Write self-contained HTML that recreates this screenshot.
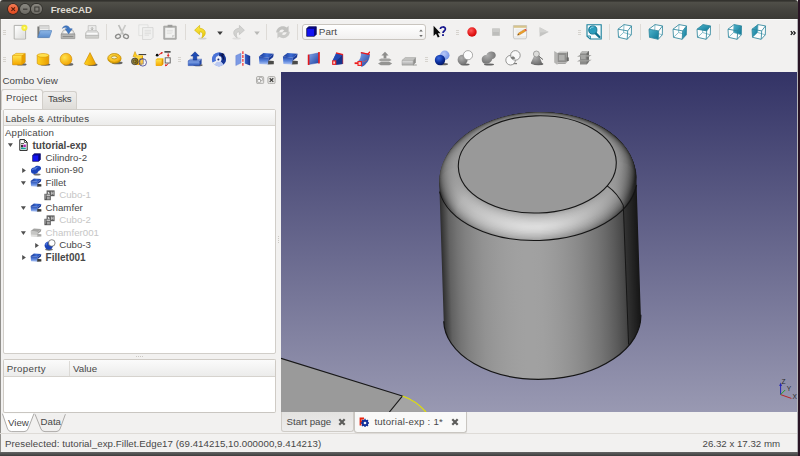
<!DOCTYPE html>
<html>
<head>
<meta charset="utf-8">
<title>FreeCAD</title>
<style>
*{box-sizing:border-box;margin:0;padding:0}
html,body{width:800px;height:456px;overflow:hidden;background:#2a1424;font-family:"Liberation Sans",sans-serif;font-size:9.7px;color:#474747}
.abs{position:absolute}
#win{position:absolute;left:0;top:0;width:798px;height:452.3px;background:#f2f1f0;overflow:hidden}
#title{position:absolute;left:0;top:0;width:798px;height:18.6px;background:linear-gradient(#33322e 0,#33322e 1.2px,#504f49 2px,#45443f 50%,#3b3a36 100%);border-radius:3px 3px 0 0}
#title .t{position:absolute;left:50.7px;top:4.4px;font-weight:bold;font-size:9.8px;color:#dfdbd2;letter-spacing:-0.1px}
.wb{position:absolute;top:3.9px;width:10.4px;height:10.4px;border-radius:50%}
.t10{font-size:9.7px;white-space:nowrap;position:absolute;line-height:12px}
#view3d{position:absolute;left:281px;top:72px;width:516px;height:340px;background:linear-gradient(#333366 0,#9999b2 100%);overflow:hidden}
.tree{position:absolute;left:2.6px;top:108.6px;width:273.6px;height:245.8px;background:#fff;border:1.3px solid #d1cec9;border-radius:2px}
.hdr{position:absolute;left:0;top:0;right:0;height:16px;background:linear-gradient(#fbfbfb,#ececeb);border-bottom:1px solid #d6d3ce}
.row{position:absolute;white-space:nowrap;font-size:9.7px;line-height:12px;height:12px}
.dis{color:#c6c6c6}
.b{font-weight:bold}
</style>
</head>
<body>
<div id="win">
  <div id="title">
    <div class="wb" style="left:7.7px;background:linear-gradient(#f47a52,#e0481e);box-shadow:0 0 0 0.8px #3a2018"></div>
    <div class="wb" style="left:19.7px;background:linear-gradient(#8a8881,#6b6963);box-shadow:0 0 0 0.9px #33322e"></div>
    <div class="wb" style="left:31.4px;background:linear-gradient(#8a8881,#6b6963);box-shadow:0 0 0 0.9px #33322e"></div>
    <svg class="abs" style="left:7.7px;top:3.9px" width="40" height="11" viewBox="0 0 40 11"><path d="M3.4,3.3 L7,6.9 M7,3.3 L3.4,6.9" stroke="#5a1c0b" stroke-width="1.1"/><path d="M15,5.2 H19.4" stroke="#3a3935" stroke-width="1.2"/><rect x="26.8" y="3" width="4.2" height="4.2" fill="#7f7d77" stroke="#3a3935" stroke-width="1"/></svg>
    <div class="t">FreeCAD</div>
  </div>
  <div class="abs" style="left:0;top:18.6px;width:1px;height:434px;background:#918f8b"></div>

  <div class="abs" style="left:1px;top:18.6px;width:796px;height:1px;background:#fafaf9"></div>
  <!-- TOOLBARS -->
  <svg width="0" height="0" style="position:absolute"><defs><linearGradient id="gy" x1="0" y1="0" x2="0" y2="1"><stop offset="0" stop-color="#ffe14a"/><stop offset="1" stop-color="#f5a800"/></linearGradient><linearGradient id="gy2" x1="0" y1="0" x2="1" y2="0"><stop offset="0" stop-color="#ffd21e"/><stop offset="1" stop-color="#e89c00"/></linearGradient><radialGradient id="gys" cx="0.38" cy="0.35" r="0.7"><stop offset="0" stop-color="#ffe24e"/><stop offset="1" stop-color="#f2a200"/></radialGradient><linearGradient id="gbl" x1="0" y1="0" x2="0" y2="1"><stop offset="0" stop-color="#8fb0ee"/><stop offset="1" stop-color="#2a55b8"/></linearGradient><linearGradient id="gbl2" x1="0" y1="0" x2="1" y2="1"><stop offset="0" stop-color="#86a8ec"/><stop offset="1" stop-color="#1d3f9e"/></linearGradient><radialGradient id="gbs" cx="0.38" cy="0.32" r="0.7"><stop offset="0" stop-color="#3b6be0"/><stop offset="0.6" stop-color="#0c2f9c"/><stop offset="1" stop-color="#061a66"/></radialGradient><radialGradient id="gls" cx="0.4" cy="0.35" r="0.7"><stop offset="0" stop-color="#b8c8f8"/><stop offset="1" stop-color="#6f8fe4"/></radialGradient><radialGradient id="ggs" cx="0.38" cy="0.32" r="0.75"><stop offset="0" stop-color="#b0b0b0"/><stop offset="1" stop-color="#6c6c6c"/></radialGradient><radialGradient id="grd" cx="0.4" cy="0.35" r="0.7"><stop offset="0" stop-color="#ff5a5a"/><stop offset="0.7" stop-color="#e01414"/><stop offset="1" stop-color="#c80c0c"/></radialGradient><linearGradient id="ggr" x1="0" y1="0" x2="0" y2="1"><stop offset="0" stop-color="#e2e2e2"/><stop offset="1" stop-color="#a4a4a4"/></linearGradient><linearGradient id="gtl" x1="0" y1="0" x2="1" y2="1"><stop offset="0" stop-color="#4fb4cc"/><stop offset="1" stop-color="#0e7796"/></linearGradient></defs></svg>
<div class="abs" style="left:3.0px;top:29.7px;width:3px;height:5px;background:repeating-linear-gradient(#d6d3ce 0,#d6d3ce 1px,transparent 1px,transparent 2px)"></div>
<svg class="abs" style="left:11.80px;top:24.20px" width="16" height="16" viewBox="0 0 16 16"><path d="M2.2,1.4 H13.6 V15 H2.2 Z" fill="#f4f4f3" stroke="#a9a9a6" stroke-width="0.9"/><path d="M3,2.2 H12.8 V14.2 H3 Z" fill="url(#pg)"/><defs><linearGradient id="pg" x1="0" y1="0" x2="1" y2="1"><stop offset="0" stop-color="#ffffff"/><stop offset="1" stop-color="#dcdcda"/></linearGradient><radialGradient id="st"><stop offset="0" stop-color="#ffffd0"/><stop offset="0.45" stop-color="#f6ee3a"/><stop offset="1" stop-color="#f2e62a" stop-opacity="0.85"/></radialGradient></defs><circle cx="12.4" cy="3.8" r="3.1" fill="url(#st)"/></svg>
<svg class="abs" style="left:36.00px;top:24.20px" width="16" height="16" viewBox="0 0 16 16"><path d="M1.4,2.6 H5 L6,3.6 H12.6 V13.4 H1.4 Z" fill="#787876"/><path d="M3.4,1.6 H13 V9 H3.4 Z" fill="#f0f0ef" stroke="#a8a8a6" stroke-width="0.6"/><path d="M4,2.8 H12.6 M4,4.2 H12.6" stroke="#c4c4c2" stroke-width="0.8"/><path d="M4.2,6.6 H15.8 L13.4,13.6 H1.8 Z" fill="url(#fo)" stroke="#4a7ab8" stroke-width="0.6"/><defs><linearGradient id="fo" x1="0" y1="0" x2="0" y2="1"><stop offset="0" stop-color="#8db6e6"/><stop offset="1" stop-color="#5a8ccc"/></linearGradient></defs></svg>
<svg class="abs" style="left:59.60px;top:24.20px" width="16" height="16" viewBox="0 0 16 16"><path d="M1.2,10 L3.6,6 H12.6 L14.8,10 Z" fill="#e4e4e3" stroke="#a2a2a0" stroke-width="0.7"/><path d="M3.4,9.4 L4.8,7 H11.2 L12.6,9.4 Z" fill="#f6f6f5"/><path d="M1.2,10 H14.8 V14.6 H1.2 Z" fill="#b6b6b4" stroke="#8e8e8c" stroke-width="0.7"/><path d="M2.6,12.6 H13.4" stroke="#8a8a88" stroke-width="1.1"/><path d="M2.4,4.4 C3.4,1.2 8.6,0.6 10,4.8 L12.2,4.8 L8.6,9.8 L5.2,4.8 L7.2,4.8 C6.6,3 4.2,2.6 2.4,4.4 Z" fill="#3f78c4" stroke="#2a5ca4" stroke-width="0.5" stroke-linejoin="round"/></svg>
<svg class="abs" style="left:83.60px;top:24.20px" width="16" height="16" viewBox="0 0 16 16"><path d="M4.2,1.6 H12 V7.4 H4.2 Z" fill="#ececeb" stroke="#bcbcba" stroke-width="0.7"/><path d="M8.1,3 V5.4 M7,4.6 L8.1,5.8 L9.2,4.6" stroke="#a6a6a4" stroke-width="0.9" fill="none"/><path d="M1.6,9 L3.4,6.8 H12.8 L14.6,9 V12 H1.6 Z" fill="#e0e0df" stroke="#b4b4b2" stroke-width="0.7"/><path d="M1.6,11.4 H14.6 V14.2 H1.6 Z" fill="#d0d0ce" stroke="#b4b4b2" stroke-width="0.7"/><path d="M2.8,9.8 H13.4" stroke="#fafafa" stroke-width="1.5"/></svg>
<div class="abs" style="left:106.2px;top:24.2px;width:1px;height:16px;background:#dedbd7"></div>
<svg class="abs" style="left:114.00px;top:24.20px" width="16" height="16" viewBox="0 0 16 16"><path d="M4.6,1 L9.2,10.4" stroke="#bcbcba" stroke-width="1.7" fill="none"/><path d="M11.4,1 L6.8,10.4" stroke="#cacac8" stroke-width="1.7" fill="none"/><ellipse cx="4" cy="12.4" rx="2.5" ry="2" fill="none" stroke="#8e8e8c" stroke-width="1.4" transform="rotate(-25 4 12.4)"/><ellipse cx="12" cy="12.4" rx="2.5" ry="2" fill="none" stroke="#8e8e8c" stroke-width="1.4" transform="rotate(25 12 12.4)"/></svg>
<svg class="abs" style="left:138.00px;top:24.20px" width="16" height="16" viewBox="0 0 16 16"><path d="M0.8,0.8 H10 V11.6 H0.8 Z" fill="#f3f3f2" stroke="#dcdcda" stroke-width="0.8"/><path d="M4.6,3.6 H15 V13.4 L12.8,15.6 H4.6 Z" fill="#f0f0ef" stroke="#d2d2d0" stroke-width="0.8"/><path d="M6.6,6.4 H13 M6.6,8 H13 M6.6,9.6 H13 M6.6,11.2 H11" stroke="#dededc" stroke-width="0.9"/></svg>
<svg class="abs" style="left:161.80px;top:24.20px" width="16" height="16" viewBox="0 0 16 16"><path d="M1.8,2.2 H14.2 V15.2 H1.8 Z" fill="#b4b4b2" stroke="#9a9a98" stroke-width="0.8"/><path d="M3.2,3.8 H12.8 V13.8 H3.2 Z" fill="#f2f2f1"/><path d="M5.6,0.8 H10.4 V3.2 H5.6 Z" fill="#9c9c9a"/><path d="M4.8,6.4 H10.8 M4.8,8 H10.8 M4.8,9.6 H9.6" stroke="#dcdcda" stroke-width="0.8"/><path d="M10.2,13.8 V11.2 H12.8 Z" fill="#c8c8c6"/></svg>
<div class="abs" style="left:185.1px;top:24.2px;width:1px;height:16px;background:#dedbd7"></div>
<svg class="abs" style="left:193.00px;top:24.20px" width="16" height="16" viewBox="0 0 16 16"><defs><linearGradient id="un" x1="0" y1="0" x2="0" y2="1"><stop offset="0" stop-color="#fbe94a"/><stop offset="1" stop-color="#e8c60a"/></linearGradient></defs><ellipse cx="9.4" cy="14.4" rx="4.2" ry="1" fill="#c8c8c6" opacity="0.8"/><path d="M6.6,1.4 L1.6,6.2 L6.6,10.6 V8 C9.2,7.6 10.8,9.4 8.8,13.8 C13,11.8 14.6,5.2 6.6,4.2 Z" fill="url(#un)" stroke="#d6b806" stroke-width="0.7" stroke-linejoin="round"/></svg>
<svg class="abs" style="left:211.60px;top:24.50px" width="16" height="16" viewBox="0 0 16 16"><path d="M5.2,6.6 H10.8 L8,10 Z" fill="#3c3c3c"/></svg>
<svg class="abs" style="left:230.30px;top:24.20px" width="16" height="16" viewBox="0 0 16 16"><ellipse cx="6.6" cy="14.4" rx="4.2" ry="1" fill="#dadad8" opacity="0.8"/><path d="M9.4,1.4 L14.4,6.2 L9.4,10.6 V8 C6.8,7.6 5.2,9.4 7.2,13.8 C3,11.8 1.4,5.2 9.4,4.2 Z" fill="#d2d2d0" stroke="#c0c0be" stroke-width="0.7" stroke-linejoin="round"/></svg>
<svg class="abs" style="left:248.70px;top:24.50px" width="16" height="16" viewBox="0 0 16 16"><path d="M5.2,6.6 H10.8 L8,10 Z" fill="#b8b8b6"/></svg>
<div class="abs" style="left:266.0px;top:24.2px;width:1px;height:16px;background:#dedbd7"></div>
<svg class="abs" style="left:274.60px;top:23.80px" width="16" height="16" viewBox="0 0 16 16"><path d="M1.2,8.6 C1.2,3.2 7.6,0.4 11.8,3.6 L13.6,1.8 V8.2 H7.2 L9.2,6.2 C7,4.6 4.4,5.8 4.2,8.6 Z" fill="#c2c2c0"/><path d="M14.8,7.8 C14.8,13.2 8.4,16 4.2,12.8 L2.4,14.6 V8.2 H8.8 L6.8,10.2 C9,11.8 11.6,10.6 11.8,7.8 Z" fill="#cacac8"/></svg>
<div class="abs" style="left:297.1px;top:24.2px;width:1px;height:16px;background:#dedbd7"></div>
<div class="abs" style="left:302.4px;top:24.2px;width:124px;height:15.6px;border:1px solid #c9c5bf;border-radius:3px;background:linear-gradient(#ffffff,#f1f0ef)"></div>
<svg class="abs" style="left:305.50px;top:26.10px" width="11" height="11" viewBox="0 0 11 11"><path d="M0.7,2.6 L2.6,0.7 H10.3 V8.2 L8.4,10.3 H0.7 Z" fill="#0a0a8c" stroke="#04044a" stroke-width="0.7"/><rect x="1.2" y="3" width="6.9" height="6.9" fill="#1212f2"/><path d="M8.4,2.9 L10,1.3 V8 L8.4,9.8 Z" fill="#060674"/></svg>
<div class="t10" style="left:318.8px;top:26.2px;font-size:9.9px">Part</div>
<svg class="abs" style="left:417.5px;top:28px" width="6" height="10" viewBox="0 0 6 10"><path d="M1.2,3.4 L3,1.4 L4.8,3.4 Z M1.2,7 L3,9 L4.8,7 Z" fill="#6c6c6a"/></svg>
<svg class="abs" style="left:431.60px;top:24.20px" width="16" height="16" viewBox="0 0 16 16"><path d="M1.6,1.8 V12 L4,9.8 L5.8,13.6 L7.6,12.8 L5.8,9.2 H8.6 Z" fill="#0a0a0a"/><path d="M8.4,5 C8.4,2.4 13.4,2.2 13.4,5 C13.4,7 11,7 11,9" fill="none" stroke="#14148c" stroke-width="1.7"/><rect x="10.1" y="10.2" width="1.8" height="1.8" fill="#14148c"/></svg>
<div class="abs" style="left:455.5px;top:29.7px;width:3px;height:5px;background:repeating-linear-gradient(#d6d3ce 0,#d6d3ce 1px,transparent 1px,transparent 2px)"></div>
<svg class="abs" style="left:464.20px;top:24.20px" width="16" height="16" viewBox="0 0 16 16"><circle cx="8" cy="8" r="4.7" fill="url(#grd)"/></svg>
<svg class="abs" style="left:488.00px;top:24.20px" width="16" height="16" viewBox="0 0 16 16"><rect x="4.2" y="4.4" width="7.6" height="7.4" fill="#bdbdbb"/><rect x="4.8" y="5" width="6.4" height="3" fill="#cacac8"/></svg>
<svg class="abs" style="left:511.60px;top:23.90px" width="16" height="16" viewBox="0 0 16 16"><path d="M1.4,1.6 H14.6 V13 L13.8,14.8 H2.2 L1.4,13 Z" fill="#f6f6f5" stroke="#bcbcba" stroke-width="0.8"/><path d="M1.6,1.6 H14.4 V3.8 H1.6 Z" fill="#d8c48a"/><path d="M2,13 H14" stroke="#dcdcda" stroke-width="0.8"/><path d="M3.4,6 H12 M3.4,8 H9 M3.4,10 H7" stroke="#e0e0de" stroke-width="0.7"/><path d="M5.6,11.2 L6.4,9.2 L12.6,5.4 L13.8,7 L7.6,10.8 Z" fill="#f0a028" stroke="#b8741a" stroke-width="0.5"/><path d="M12.6,5.4 L13.6,4.8 L14.8,6.4 L13.8,7 Z" fill="#e23c3c"/><path d="M5.6,11.2 L6.2,9.8 L7,10.8 Z" fill="#4a3a2a"/></svg>
<svg class="abs" style="left:535.60px;top:24.20px" width="16" height="16" viewBox="0 0 16 16"><path d="M3.6,3.2 L12.6,8 L3.6,12.8 Z" fill="#c4c4c2"/><path d="M3.6,3.2 L12.6,8 L3.6,8.6 Z" fill="#d2d2d0"/></svg>
<div class="abs" style="left:577.7px;top:29.7px;width:3px;height:5px;background:repeating-linear-gradient(#d6d3ce 0,#d6d3ce 1px,transparent 1px,transparent 2px)"></div>
<svg class="abs" style="left:586.40px;top:24.00px" width="16" height="16" viewBox="0 0 16 16"><path d="M1,0.8 H15.2 V15 H4.2 L1,12.2 Z" fill="#f7fbfc" stroke="#18809c" stroke-width="1.1"/><path d="M1.2,12 H4.4 V15" fill="none" stroke="#18809c" stroke-width="0.9"/><path d="M9,8.6 L13.4,13" stroke="#0f6f8c" stroke-width="2.4" stroke-linecap="round"/><circle cx="6.8" cy="6" r="4.1" fill="#2a9cbc" stroke="#0f6f8c" stroke-width="0.9"/><path d="M4.2,5 A3,3 0 0 1 7.6,3" stroke="#8fd4e6" stroke-width="1" fill="none"/></svg>
<div class="abs" style="left:608.9px;top:24.2px;width:1px;height:16px;background:#dedbd7"></div>
<svg class="abs" style="left:617.40px;top:24.00px" width="16" height="16" viewBox="0 0 16 16"><path d="M1.0,5.2 L7.0,0.6 L14.5,1.9 L14.3,10.8 L10.2,15.3 L1.5,13.3 Z" fill="#ffffff" fill-opacity="0.85"/><path d="M6.6,8.5 L7.0,0.6 M6.6,8.5 L1.5,13.3 M6.6,8.5 L14.3,10.8" stroke="#5aa6b8" stroke-width="0.7" fill="none"/><path d="M1.0,5.2 L7.0,0.6 L14.5,1.9 L14.3,10.8 L10.2,15.3 L1.5,13.3 Z M10.7,6.9 L1.0,5.2 M10.7,6.9 L14.5,1.9 M10.7,6.9 L10.2,15.3" stroke="#2f879d" stroke-width="0.85" fill="none" stroke-linejoin="round"/></svg>
<div class="abs" style="left:640.1px;top:24.2px;width:1px;height:16px;background:#dedbd7"></div>
<svg class="abs" style="left:648.30px;top:24.00px" width="16" height="16" viewBox="0 0 16 16"><path d="M1.0,5.2 L7.0,0.6 L14.5,1.9 L14.3,10.8 L10.2,15.3 L1.5,13.3 Z" fill="#ffffff" fill-opacity="0.85"/><path d="M6.6,8.5 L7.0,0.6 M6.6,8.5 L1.5,13.3 M6.6,8.5 L14.3,10.8" stroke="#5aa6b8" stroke-width="0.7" fill="none"/><path d="M1.0,5.2 L10.7,6.9 L10.2,15.3 L1.5,13.3 Z" fill="url(#gtl)"/><path d="M1.0,5.2 L7.0,0.6 L14.5,1.9 L14.3,10.8 L10.2,15.3 L1.5,13.3 Z M10.7,6.9 L1.0,5.2 M10.7,6.9 L14.5,1.9 M10.7,6.9 L10.2,15.3" stroke="#2f879d" stroke-width="0.85" fill="none" stroke-linejoin="round"/></svg>
<svg class="abs" style="left:672.10px;top:24.00px" width="16" height="16" viewBox="0 0 16 16"><path d="M1.0,5.2 L7.0,0.6 L14.5,1.9 L14.3,10.8 L10.2,15.3 L1.5,13.3 Z" fill="#ffffff" fill-opacity="0.85"/><path d="M6.6,8.5 L7.0,0.6 M6.6,8.5 L1.5,13.3 M6.6,8.5 L14.3,10.8" stroke="#5aa6b8" stroke-width="0.7" fill="none"/><path d="M10.7,6.9 L14.5,1.9 L14.3,10.8 L10.2,15.3 Z" fill="url(#gtl)"/><path d="M1.0,5.2 L7.0,0.6 L14.5,1.9 L14.3,10.8 L10.2,15.3 L1.5,13.3 Z M10.7,6.9 L1.0,5.2 M10.7,6.9 L14.5,1.9 M10.7,6.9 L10.2,15.3" stroke="#2f879d" stroke-width="0.85" fill="none" stroke-linejoin="round"/></svg>
<svg class="abs" style="left:696.10px;top:24.00px" width="16" height="16" viewBox="0 0 16 16"><path d="M1.0,5.2 L7.0,0.6 L14.5,1.9 L14.3,10.8 L10.2,15.3 L1.5,13.3 Z" fill="#ffffff" fill-opacity="0.85"/><path d="M6.6,8.5 L7.0,0.6 M6.6,8.5 L1.5,13.3 M6.6,8.5 L14.3,10.8" stroke="#5aa6b8" stroke-width="0.7" fill="none"/><path d="M1.0,5.2 L7.0,0.6 L14.5,1.9 L10.7,6.9 Z" fill="url(#gtl)"/><path d="M1.0,5.2 L7.0,0.6 L14.5,1.9 L14.3,10.8 L10.2,15.3 L1.5,13.3 Z M10.7,6.9 L1.0,5.2 M10.7,6.9 L14.5,1.9 M10.7,6.9 L10.2,15.3" stroke="#2f879d" stroke-width="0.85" fill="none" stroke-linejoin="round"/></svg>
<div class="abs" style="left:719.1px;top:24.2px;width:1px;height:16px;background:#dedbd7"></div>
<svg class="abs" style="left:727.00px;top:24.00px" width="16" height="16" viewBox="0 0 16 16"><path d="M1.0,5.2 L7.0,0.6 L14.5,1.9 L14.3,10.8 L10.2,15.3 L1.5,13.3 Z" fill="#ffffff" fill-opacity="0.85"/><path d="M7.0,0.6 L14.5,1.9 L14.3,10.8 L6.6,8.5 Z" fill="url(#gtl)"/><path d="M6.6,8.5 L7.0,0.6 M6.6,8.5 L1.5,13.3 M6.6,8.5 L14.3,10.8" stroke="#5aa6b8" stroke-width="0.7" fill="none"/><path d="M1.0,5.2 L7.0,0.6 L14.5,1.9 L14.3,10.8 L10.2,15.3 L1.5,13.3 Z M10.7,6.9 L1.0,5.2 M10.7,6.9 L14.5,1.9 M10.7,6.9 L10.2,15.3" stroke="#2f879d" stroke-width="0.85" fill="none" stroke-linejoin="round"/></svg>
<svg class="abs" style="left:750.80px;top:24.00px" width="16" height="16" viewBox="0 0 16 16"><path d="M1.0,5.2 L7.0,0.6 L14.5,1.9 L14.3,10.8 L10.2,15.3 L1.5,13.3 Z" fill="#ffffff" fill-opacity="0.85"/><path d="M1.0,5.2 L7.0,0.6 L6.6,8.5 L1.5,13.3 Z" fill="url(#gtl)"/><path d="M6.6,8.5 L7.0,0.6 M6.6,8.5 L1.5,13.3 M6.6,8.5 L14.3,10.8" stroke="#5aa6b8" stroke-width="0.7" fill="none"/><path d="M1.0,5.2 L7.0,0.6 L14.5,1.9 L14.3,10.8 L10.2,15.3 L1.5,13.3 Z M10.7,6.9 L1.0,5.2 M10.7,6.9 L14.5,1.9 M10.7,6.9 L10.2,15.3" stroke="#2f879d" stroke-width="0.85" fill="none" stroke-linejoin="round"/></svg>
<svg class="abs" style="left:784.60px;top:24.80px" width="16" height="16" viewBox="0 0 16 16"><path d="M5.8,6.1 L7.5,8 L5.8,9.9 M8.5,6.1 L10.2,8 L8.5,9.9" stroke="#161616" stroke-width="1.25" fill="none"/></svg>
  <div class="abs" style="left:3.0px;top:56.6px;width:3px;height:5px;background:repeating-linear-gradient(#d6d3ce 0,#d6d3ce 1px,transparent 1px,transparent 2px)"></div>
<svg class="abs" style="left:11.00px;top:50.60px" width="16" height="16" viewBox="0 0 16 16"><ellipse cx="10.6" cy="13.4" rx="5" ry="1.2" fill="#2a2a2a" opacity="0.7"/><path d="M1.6,4.6 L5.2,2.4 H14.2 V11.2 L10.8,13.8 H1.6 Z" fill="#e09600" stroke="#c88600" stroke-width="0.6"/><path d="M1.6,4.6 L5.2,2.4 H14.2 L10.8,4.6 Z" fill="#ffdc4a"/><path d="M1.9,4.9 H10.6 V13.5 H1.9 Z" fill="url(#gy)"/><path d="M10.9,4.8 L14,2.8 V11 L10.9,13.4 Z" fill="#e8a000"/></svg>
<svg class="abs" style="left:34.60px;top:50.60px" width="16" height="16" viewBox="0 0 16 16"><ellipse cx="10.4" cy="13.6" rx="5" ry="1.2" fill="#2a2a2a" opacity="0.7"/><path d="M2.2,4.4 V12.2 A5.8,1.9 0 0 0 13.8,12.2 V4.4 Z" fill="url(#gy2)" stroke="#c88600" stroke-width="0.6"/><ellipse cx="8" cy="4.4" rx="5.8" ry="1.9" fill="#ffe04e" stroke="#d89600" stroke-width="0.6"/></svg>
<svg class="abs" style="left:58.20px;top:50.60px" width="16" height="16" viewBox="0 0 16 16"><ellipse cx="10.4" cy="13.4" rx="5" ry="1.3" fill="#2a2a2a" opacity="0.7"/><circle cx="8" cy="8.2" r="5.9" fill="url(#gys)" stroke="#d08c00" stroke-width="0.6"/></svg>
<svg class="abs" style="left:81.90px;top:50.60px" width="16" height="16" viewBox="0 0 16 16"><ellipse cx="10.6" cy="13.8" rx="5" ry="1.2" fill="#2a2a2a" opacity="0.7"/><path d="M8,1.6 L2.4,12.6 A5.6,1.7 0 0 0 13.6,12.6 Z" fill="url(#gy2)" stroke="#c88600" stroke-width="0.6" stroke-linejoin="round"/></svg>
<svg class="abs" style="left:106.80px;top:50.60px" width="16" height="16" viewBox="0 0 16 16"><ellipse cx="10.2" cy="11.8" rx="5.4" ry="1.5" fill="#2a2a2a" opacity="0.7"/><ellipse cx="7.4" cy="7.4" rx="6.7" ry="4.9" fill="url(#gys)" stroke="#b88a00" stroke-width="0.7"/><path d="M1.4,8.6 C3,12.2 11,12.6 13.6,8.8" fill="none" stroke="#c89400" stroke-width="1.2" opacity="0.7"/><ellipse cx="7.2" cy="6.4" rx="2.9" ry="1.5" fill="#f4eecc" stroke="#a87c00" stroke-width="0.7"/></svg>
<svg class="abs" style="left:130.90px;top:50.60px" width="16" height="16" viewBox="0 0 16 16"><path d="M7.6,3.6 H15.2" stroke="#1a1a1a" stroke-width="0.9"/><path d="M4,0.6 L2,5.8 H6.2 Z" fill="#ffd21e" stroke="#c88600" stroke-width="0.5"/><path d="M4.4,5.4 L6,4.4 H12 V12.6 L10.6,13.8 H4.4 Z" fill="#e89c00"/><rect x="4.4" y="5.4" width="6.4" height="8.4" fill="url(#gy)"/><path d="M4.4,5.4 L6,4.4 H12 L10.8,5.4 Z" fill="#ffe04e"/><circle cx="3.8" cy="10.4" r="3.3" fill="#7a6410" fill-opacity="0.75" stroke="#3a3a3a" stroke-width="0.8"/><circle cx="3.8" cy="10.4" r="1.5" fill="none" stroke="#4a4010" stroke-width="0.7"/><rect x="9" y="8" width="3.4" height="5" fill="none" stroke="#4a4a4a" stroke-width="0.6"/><circle cx="11.8" cy="11.4" r="3.7" fill="#fff" fill-opacity="0.25" stroke="#34348a" stroke-width="0.75"/></svg>
<svg class="abs" style="left:154.80px;top:50.60px" width="16" height="16" viewBox="0 0 16 16"><circle cx="2.2" cy="4.2" r="1.4" fill="#0a0a0a"/><path d="M9.4,0.9 H15.6" stroke="#0a0a0a" stroke-width="1.2"/><path d="M4,3.6 L7,1.8" stroke="#e01818" stroke-width="1" fill="none"/><path d="M5.6,1.2 L8,1.2 L6.8,3.2 Z" fill="#e01818"/><path d="M13.2,2.4 V5" stroke="#e01818" stroke-width="1"/><path d="M11.8,4.2 H14.6 L13.2,6 Z" fill="#e01818"/><path d="M13.4,12.6 L11.4,14" stroke="#e01818" stroke-width="1"/><path d="M10.4,13 L12.4,14.8 L10,15.2 Z" fill="#e01818"/><rect x="10.2" y="6.8" width="5" height="5.2" fill="#f4f4f4" stroke="#5a5a5a" stroke-width="0.9"/><path d="M0.8,8.6 L2.6,7.2 H8.4 V13.2 L6.8,14.8 H0.8 Z" fill="#e09600"/><path d="M0.8,8.6 L2.6,7.2 H8.4 L6.8,8.6 Z" fill="#ffdc4a"/><rect x="0.9" y="8.7" width="5.8" height="6" fill="url(#gy)"/></svg>
<div class="abs" style="left:178.2px;top:56.6px;width:3px;height:5px;background:repeating-linear-gradient(#d6d3ce 0,#d6d3ce 1px,transparent 1px,transparent 2px)"></div>
<svg class="abs" style="left:187.20px;top:50.60px" width="16" height="16" viewBox="0 0 16 16"><ellipse cx="11" cy="14.2" rx="4.6" ry="1.1" fill="#2a2a2a" opacity="0.7"/><path d="M1.2,10 L3.4,8.2 H14.6 L12.6,10 Z" fill="#9cbaf0" stroke="#2a4fae" stroke-width="0.5"/><path d="M1.2,10 H12.6 V14.6 H1.2 Z" fill="url(#gbl)" stroke="#2a4fae" stroke-width="0.5"/><path d="M12.6,10 L14.6,8.2 V12.8 L12.6,14.6 Z" fill="#2448a4"/><path d="M8,0.8 L3.8,5 H6.2 V9 H9.8 V5 H12.2 Z" fill="#1e4cb4" stroke="#0e2f84" stroke-width="0.5"/></svg>
<svg class="abs" style="left:210.90px;top:50.60px" width="16" height="16" viewBox="0 0 16 16"><circle cx="8" cy="8.4" r="7" fill="#7f9de6"/><path d="M8,8.4 L8,1.4 A7,7 0 0 1 12.6,13.6 Z" fill="#173694"/><path d="M8,8.4 L1.6,11.4 A7,7 0 0 1 8,1.4 Z" fill="#4a72d6"/><path d="M8,8.4 L3.2,13.6 A7,7 0 0 0 12.6,13.6 Z" fill="#b9c8f2"/><path d="M8,8.4 L1.6,11.4 L3.4,13.8 Z" fill="#f2f1f0"/><circle cx="7.6" cy="8" r="3" fill="#eef0f8"/><circle cx="7.4" cy="8.4" r="1" fill="#14246a"/><path d="M7.4,4.6 V7" stroke="#eef0f8" stroke-width="1.2"/><path d="M9.4,3.6 A5,5 0 0 1 12.6,8.6" stroke="#0a1650" stroke-width="1.2" fill="none"/><path d="M10.6,2 L13.6,3 L11.2,5.4 Z" fill="#0a1650"/></svg>
<svg class="abs" style="left:234.60px;top:50.60px" width="16" height="16" viewBox="0 0 16 16"><path d="M0.8,4.6 L6,2.2 V12 L0.8,14.6 Z" fill="#7c9ae4" stroke="#5a7ad0" stroke-width="0.4"/><path d="M9.8,2.6 L15.2,5 V14.6 L9.8,12.6 Z" fill="url(#mr)"/><defs><linearGradient id="mr" x1="0" y1="0" x2="1" y2="0"><stop offset="0" stop-color="#3a64cc"/><stop offset="1" stop-color="#12308c"/></linearGradient></defs><path d="M7.9,0.2 V15.8" stroke="#f01414" stroke-width="1.1" stroke-dasharray="2.8 1.1"/></svg>
<svg class="abs" style="left:258.20px;top:50.60px" width="16" height="16" viewBox="0 0 16 16"><defs><linearGradient id="ftop" x1="0" y1="0" x2="1" y2="0"><stop offset="0" stop-color="#16348e"/><stop offset="0.55" stop-color="#3c6cd4"/><stop offset="1" stop-color="#1a3c9c"/></linearGradient><linearGradient id="ffr" x1="0" y1="0" x2="0" y2="1"><stop offset="0" stop-color="#2348ac"/><stop offset="0.55" stop-color="#5a84dc"/><stop offset="1" stop-color="#b4c8f4"/></linearGradient></defs><path d="M9.6,9.4 L15.8,10 V13.2 L9.6,13.6 Z" fill="#4a4a48"/><path d="M0.9,5.6 L10.8,6.8 C10.3,8.4 10.1,10 10.1,13.6 L1.4,13 Z" fill="url(#ffr)"/><path d="M10.8,6.8 L15.6,2.8 C15.6,4.4 15.4,5.2 15,6.2 L10.3,10 C10.3,8.6 10.4,7.8 10.8,6.8 Z" fill="#1a3a98"/><path d="M0.9,5.6 L5.4,2 L15.6,2.8 L10.8,6.8 Z" fill="url(#ftop)"/></svg>
<svg class="abs" style="left:282.10px;top:50.60px" width="16" height="16" viewBox="0 0 16 16"><defs><linearGradient id="ftop" x1="0" y1="0" x2="1" y2="0"><stop offset="0" stop-color="#16348e"/><stop offset="0.55" stop-color="#3c6cd4"/><stop offset="1" stop-color="#1a3c9c"/></linearGradient><linearGradient id="ffr" x1="0" y1="0" x2="0" y2="1"><stop offset="0" stop-color="#2348ac"/><stop offset="0.55" stop-color="#5a84dc"/><stop offset="1" stop-color="#b4c8f4"/></linearGradient></defs><path d="M9.6,9.4 L15.8,10 V13.2 L9.6,13.6 Z" fill="#4a4a48"/><path d="M0.9,5.6 L10.8,6.8 L10.1,13.6 L1.4,13 Z" fill="url(#ffr)"/><path d="M10.8,6.8 L15.6,2.8 L15,6.2 L10.3,10 Z" fill="#1a3a98"/><path d="M0.9,5.6 L5.4,2 L15.6,2.8 L10.8,6.8 Z" fill="url(#ftop)"/></svg>
<svg class="abs" style="left:306.00px;top:50.60px" width="16" height="16" viewBox="0 0 16 16"><path d="M2.4,4 L13,1.8 V11.8 L2.4,13.6 Z" fill="url(#gbl2)" stroke="#2a4fae" stroke-width="0.4"/><path d="M2.6,3.6 V14" stroke="#e81818" stroke-width="1.6"/><path d="M13,1 V12.4" stroke="#e81818" stroke-width="1.6"/></svg>
<svg class="abs" style="left:329.60px;top:50.60px" width="16" height="16" viewBox="0 0 16 16"><path d="M6.2,2 L12.8,3.6 V13 L5.8,13.8 L2.6,13.4 V9.4 Z" fill="url(#gbl2)"/><path d="M6.2,2 L12.8,3.6 L6,9.8 L2.6,9.4 Z" fill="#2249b4"/><path d="M6,9.8 L12.8,3.6 V13 L5.8,13.8 Z" fill="#16338e"/><path d="M6,1.9 L13,3.6" stroke="#ee1c1c" stroke-width="1.3"/><path d="M12.8,3.4 V13" stroke="#e02828" stroke-width="0.6"/><rect x="2.7" y="9.9" width="3" height="3.4" fill="#f4d0d0" stroke="#ee1c1c" stroke-width="1.1"/></svg>
<svg class="abs" style="left:353.50px;top:50.60px" width="16" height="16" viewBox="0 0 16 16"><path d="M7,1.6 L15.6,3.4 C15.4,9 12,14 7.4,15.6 L3.6,10.4 C6,9 7.2,5.6 7,1.6 Z" fill="url(#gbl2)"/><path d="M7,1.6 L15.6,3.4 C15.4,9 12,14 7.4,15.6" fill="none" stroke="#2448a8" stroke-width="0.5"/><path d="M6.8,1.6 L15.4,3.4" stroke="#ee1c1c" stroke-width="1.3"/><path d="M13.6,3.4 L16,0.8" stroke="#ee1c1c" stroke-width="1.3"/><path d="M8.6,10.6 C10.4,10.8 11.6,10.2 13,9" stroke="#e85050" stroke-width="0.6" fill="none"/><path d="M0.6,12.2 H4" stroke="#ee1c1c" stroke-width="1.8"/><rect x="4" y="10.6" width="3.4" height="3.8" fill="#f4d0d0" stroke="#ee1c1c" stroke-width="1.1"/></svg>
<svg class="abs" style="left:377.00px;top:50.60px" width="16" height="16" viewBox="0 0 16 16"><path d="M8,0.8 L4.4,4.6 H6.6 V7.4 H9.4 V4.6 H11.6 Z" fill="#8e8e8c"/><path d="M1.6,9 L4,7.4 H12.4 L14.6,9 L12,10.4 H4 Z" fill="#a2a2a0"/><path d="M1,12.6 L3.8,11 H12.6 L15.2,12.6 L12.4,14.2 H3.8 Z" fill="#949492"/></svg>
<svg class="abs" style="left:401.40px;top:50.60px" width="16" height="16" viewBox="0 0 16 16"><path d="M1,9.4 L4.2,6.6 H14.8 L12.2,9.4 Z" fill="#c4c4c2" stroke="#9a9a98" stroke-width="0.5"/><path d="M1,9.4 H12.2 V14.2 H1 Z" fill="url(#ggr)" stroke="#9a9a98" stroke-width="0.5"/><path d="M12.2,9.4 L14.8,6.6 V11.6 L12.2,14.2 Z" fill="#8e8e8c"/><path d="M12,13.4 H15.8 V14.6 H12 Z" fill="#8a8a88" opacity="0.7"/></svg>
<div class="abs" style="left:425.2px;top:56.6px;width:3px;height:5px;background:repeating-linear-gradient(#d6d3ce 0,#d6d3ce 1px,transparent 1px,transparent 2px)"></div>
<svg class="abs" style="left:433.50px;top:50.30px" width="16" height="16" viewBox="0 0 16 16"><ellipse cx="9.4" cy="14.2" rx="4.6" ry="1.1" fill="#2a2a2a" opacity="0.7"/><circle cx="10.8" cy="5.2" r="4.7" fill="url(#gls)"/><circle cx="6" cy="10" r="5.2" fill="url(#gbs)"/></svg>
<svg class="abs" style="left:457.00px;top:50.30px" width="16" height="16" viewBox="0 0 16 16"><ellipse cx="8" cy="14.4" rx="4.6" ry="1.0" fill="#2a2a2a" opacity="0.7"/><circle cx="5.6" cy="9.8" r="5" fill="url(#ggs)"/><circle cx="11" cy="5.2" r="4.6" fill="#fdfdfd" stroke="#8a8a88" stroke-width="0.7"/></svg>
<svg class="abs" style="left:481.20px;top:50.30px" width="16" height="16" viewBox="0 0 16 16"><ellipse cx="8" cy="14.4" rx="5" ry="1.0" fill="#2a2a2a" opacity="0.7"/><path d="M0.8,10 C0.4,6.4 3.4,4.8 5.4,5 C6.2,1.8 10.4,0.4 13.2,2.2 C16,4.4 14.8,8.4 11.4,9 C10.4,13 6,14.8 3,13.4 C1.6,12.6 0.9,11.4 0.8,10 Z" fill="url(#ggs)"/></svg>
<svg class="abs" style="left:505.20px;top:50.30px" width="16" height="16" viewBox="0 0 16 16"><path d="M4,13.6 H12" stroke="#7a7a78" stroke-width="1.2"/><circle cx="5.6" cy="10.2" r="4.8" fill="#fafafa" stroke="#7e7e7c" stroke-width="0.8"/><circle cx="10.4" cy="5.4" r="4.8" fill="#fafafa" fill-opacity="0.8" stroke="#7e7e7c" stroke-width="0.8"/><path d="M5.8,7.4 C7,5.8 9.4,6.4 10.2,8.2 C9,9.8 6.6,9.4 5.8,7.4 Z" fill="#7c7c7a"/></svg>
<svg class="abs" style="left:528.90px;top:50.30px" width="16" height="16" viewBox="0 0 16 16"><ellipse cx="9.4" cy="14" rx="5" ry="1.2" fill="#2a2a2a" opacity="0.7"/><path d="M6,4 L1.8,13 A5.6,1.6 0 0 0 13,13 L9.4,4 Z" fill="url(#ggs)"/><circle cx="7.4" cy="4" r="3" fill="#dcdcda" stroke="#8a8a88" stroke-width="0.7"/><path d="M9.6,6 L14,9.6" stroke="#6a6a68" stroke-width="1"/></svg>
<svg class="abs" style="left:552.70px;top:50.30px" width="16" height="16" viewBox="0 0 16 16"><path d="M1.2,1 L4.4,3 V15 L1.2,12.6 Z" fill="#b4b4b2"/><path d="M4.4,3 H13.6 V12.4 H4.4 Z" fill="#8e8e8c"/><path d="M4.4,3 L6.8,1.4 H15 L13.6,3 Z" fill="#c4c4c2"/><path d="M13.6,3 L15,1.4 V10.8 L13.6,12.4 Z" fill="#7a7a78"/><rect x="6" y="5" width="5.6" height="5.4" fill="#b0b0ae"/><path d="M4.4,12.4 H13.6 L12.4,14 H4.4 Z" fill="#a4a4a2"/><path d="M13.6,7.4 H15.8 V11 H13.6 Z" fill="#686866"/></svg>
<svg class="abs" style="left:576.40px;top:50.30px" width="16" height="16" viewBox="0 0 16 16"><path d="M4,3.4 L6.4,1 H13 V11.6 L10.6,14.4 H4 Z" fill="#8a8a88"/><path d="M4,3.4 L6.4,1 H13 L10.6,3.4 Z" fill="#b8b8b6"/><path d="M10.6,3.4 L13,1 V11.6 L10.6,14.4 Z" fill="#6e6e6c"/><path d="M1,6.8 L3.6,5 H15.6 L13,6.8 Z" fill="#9c9c9a" opacity="0.9"/><path d="M1,11.6 L3.6,9.8 H15.6 L13,11.6 Z" fill="#9c9c9a" opacity="0.9"/><path d="M5,5 H9.6 V9 H5 Z" fill="#a6a6a4"/></svg>

  <!-- COMBO VIEW -->
  <div class="t10" style="left:2.5px;top:74.5px;font-size:9.8px">Combo View</div>

  <!-- tabs -->
  <div class="abs" style="left:42px;top:90.6px;width:35px;height:18.4px;background:linear-gradient(#efeeec,#dfddd9);border:1px solid #d2cfca;border-bottom:none;border-radius:3px 3px 0 0"></div>
  <div class="t10" style="left:48px;top:93.2px;letter-spacing:-0.28px">Tasks</div>
  <div class="abs" style="left:1.4px;top:88.8px;width:41.2px;height:21px;background:#f7f6f5;border:1px solid #d2cfca;border-bottom:none;border-radius:3px 3px 0 0"></div>
  <div class="t10" style="left:6px;top:92.4px;letter-spacing:0.19px">Project</div>

  <div class="tree">
    <div class="hdr"></div>
  </div>
  <div class="t10" style="left:5.5px;top:112.5px;letter-spacing:0.15px">Labels &amp; Attributes</div>
  <div id="rows"><div class="row " style="left:5.0px;top:126.74px;font-size:9.7px;letter-spacing:0.15px">Application</div>
<div class="row b" style="left:32.5px;top:139.82px;font-size:10px">tutorial-exp</div>
<svg class="abs" style="left:7.4px;top:142.38px" width="7" height="6" viewBox="0 0 7 6"><path d="M0.9,1.2 H5.9 L3.4,4.9 Z" fill="#505050"/></svg>
<svg class="abs" style="left:18.5px;top:139.38px" width="9" height="12" viewBox="0 0 9 12"><path d="M0.8,0.6 H5.6 L8.2,3.2 V11.4 H0.8 Z" fill="#fff" stroke="#222" stroke-width="1"/><path d="M5.4,0.8 V3.4 H8" fill="none" stroke="#222" stroke-width="0.8"/><rect x="2" y="4" width="3" height="0.9" fill="#555"/><rect x="2" y="5.8" width="2.2" height="2.6" fill="#333"/><rect x="4.4" y="5.6" width="2.4" height="2.4" fill="#b020b0"/><rect x="2" y="8.6" width="4.8" height="1.6" fill="#18a0a0"/></svg>
<div class="row " style="left:45.6px;top:151.70px;font-size:9.7px">Cilindro-2</div>
<svg class="abs" style="left:31.5px;top:153.36px" width="9" height="9" viewBox="0 0 10 10"><path d="M0.7,2.4 L2.6,0.7 H9.3 V7.4 L7.4,9.3 H0.7 Z" fill="#0a0a9a" stroke="#05055a" stroke-width="0.7"/><rect x="1.2" y="2.8" width="5.9" height="6" fill="#1414f0"/><path d="M7.3,2.7 L9,1.2 V7.2 L7.3,8.9 Z" fill="#06067a"/></svg>
<div class="row " style="left:45.6px;top:164.18px;font-size:9.7px">union-90</div>
<svg class="abs" style="left:21.2px;top:166.64px" width="6" height="7" viewBox="0 0 6 7"><path d="M1.2,1 V6 L4.9,3.5 Z" fill="#505050"/></svg>
<svg class="abs" style="left:30.0px;top:164.84px" width="12" height="11" viewBox="0 0 12 11"><ellipse cx="7" cy="9.6" rx="3.6" ry="1" fill="#333" opacity="0.7"/><path d="M1,6.2 C0.6,3.6 2.6,2.4 4.4,2.6 C5.2,0.8 8.4,0.2 10.2,1.6 C12,3.2 10.8,5.6 8.6,6 C7.8,8.6 4.6,9.6 2.6,8.6 C1.6,8.1 1.1,7.2 1,6.2 Z" fill="#1c44b8"/><path d="M2,5.6 C1.8,4 3.2,3.2 4.6,3.4 C5.4,2 7.6,1.2 9,2 C7.4,2.2 6.4,3.2 5.8,4.6 C4.4,4.4 2.8,4.6 2,5.6 Z" fill="#5c86e8" opacity="0.9"/></svg>
<div class="row " style="left:45.6px;top:176.66px;font-size:9.7px">Fillet</div>
<svg class="abs" style="left:20.4px;top:179.82px" width="7" height="6" viewBox="0 0 7 6"><path d="M0.9,1.2 H5.9 L3.4,4.9 Z" fill="#505050"/></svg>
<svg class="abs" style="left:30.2px;top:177.07px" width="11.5" height="11.5" viewBox="0 0 16 16"><path d="M9.6,9.4 L15.8,10 V13.2 L9.6,13.6 Z" fill="#3c3c3a"/><path d="M0.9,5.6 L10.8,6.8 C10.3,8.4 10.1,10 10.1,13.6 L1.4,13 Z" fill="url(#ffr)"/><path d="M10.8,6.8 L15.6,2.8 C15.6,4.4 15.4,5.2 15,6.2 L10.3,10 C10.3,8.6 10.4,7.8 10.8,6.8 Z" fill="#1a3a98"/><path d="M0.9,5.6 L5.4,2 L15.6,2.8 L10.8,6.8 Z" fill="url(#ftop)"/></svg>
<div class="row dis" style="left:59.2px;top:189.14px;font-size:9.7px">Cubo-1</div>
<svg class="abs" style="left:44.0px;top:190.00px" width="11" height="10.6" viewBox="0 0 11 10.6"><rect x="2.6" y="0.4" width="8" height="5.8" fill="#5c5c5c"/><path d="M3.8,1.4 L6,3.2 L3.8,5 Z" fill="#f4f4f4"/><path d="M7.4,1.6 V4.8 M9.2,1.6 V4.8 M7.4,3.2 H9.2" stroke="#d8d8d8" stroke-width="0.8"/><rect x="0.4" y="3.8" width="6.4" height="6.4" fill="#585858"/><rect x="1" y="4.2" width="1.2" height="4.6" fill="#8a8a8a"/><rect x="3" y="6.6" width="2.8" height="2.8" fill="#a4a4a4"/><rect x="2.6" y="4.6" width="3.6" height="1.2" fill="#dcdcdc"/></svg>
<div class="row " style="left:45.6px;top:201.62px;font-size:9.7px">Chamfer</div>
<svg class="abs" style="left:20.4px;top:204.78px" width="7" height="6" viewBox="0 0 7 6"><path d="M0.9,1.2 H5.9 L3.4,4.9 Z" fill="#505050"/></svg>
<svg class="abs" style="left:30.2px;top:202.03px" width="11.5" height="11.5" viewBox="0 0 16 16"><path d="M9.6,9.4 L15.8,10 V13.2 L9.6,13.6 Z" fill="#3c3c3a"/><path d="M0.9,5.6 L10.8,6.8 C10.3,8.4 10.1,10 10.1,13.6 L1.4,13 Z" fill="url(#ffr)"/><path d="M10.8,6.8 L15.6,2.8 C15.6,4.4 15.4,5.2 15,6.2 L10.3,10 C10.3,8.6 10.4,7.8 10.8,6.8 Z" fill="#1a3a98"/><path d="M0.9,5.6 L5.4,2 L15.6,2.8 L10.8,6.8 Z" fill="url(#ftop)"/></svg>
<div class="row dis" style="left:59.2px;top:214.10px;font-size:9.7px">Cubo-2</div>
<svg class="abs" style="left:44.0px;top:214.96px" width="11" height="10.6" viewBox="0 0 11 10.6"><rect x="2.6" y="0.4" width="8" height="5.8" fill="#5c5c5c"/><path d="M3.8,1.4 L6,3.2 L3.8,5 Z" fill="#f4f4f4"/><path d="M7.4,1.6 V4.8 M9.2,1.6 V4.8 M7.4,3.2 H9.2" stroke="#d8d8d8" stroke-width="0.8"/><rect x="0.4" y="3.8" width="6.4" height="6.4" fill="#585858"/><rect x="1" y="4.2" width="1.2" height="4.6" fill="#8a8a8a"/><rect x="3" y="6.6" width="2.8" height="2.8" fill="#a4a4a4"/><rect x="2.6" y="4.6" width="3.6" height="1.2" fill="#dcdcdc"/></svg>
<div class="row dis" style="left:45.6px;top:226.58px;font-size:9.7px">Chamfer001</div>
<svg class="abs" style="left:20.4px;top:229.74px" width="7" height="6" viewBox="0 0 7 6"><path d="M0.9,1.2 H5.9 L3.4,4.9 Z" fill="#505050"/></svg>
<svg class="abs" style="left:30.2px;top:226.99px" width="11.5" height="11.5" viewBox="0 0 16 16"><path d="M9.6,9.4 L15.8,10 V13.2 L9.6,13.6 Z" fill="#a8a8a6"/><path d="M0.9,5.6 L10.8,6.8 C10.3,8.4 10.1,10 10.1,13.6 L1.4,13 Z" fill="#c6c6c4"/><path d="M1.2,10.4 L10.1,11 V13.6 L1.4,13 Z" fill="#e0e0de"/><path d="M10.8,6.8 L15.6,2.8 C15.6,4.4 15.4,5.2 15,6.2 L10.3,10 C10.3,8.6 10.4,7.8 10.8,6.8 Z" fill="#9c9c9a"/><path d="M0.9,5.6 L5.4,2 L15.6,2.8 L10.8,6.8 Z" fill="#a4a4a2"/></svg>
<div class="row " style="left:59.2px;top:239.06px;font-size:9.7px">Cubo-3</div>
<svg class="abs" style="left:34.2px;top:241.52px" width="6" height="7" viewBox="0 0 6 7"><path d="M1.2,1 V6 L4.9,3.5 Z" fill="#505050"/></svg>
<svg class="abs" style="left:43.5px;top:239.22px" width="12" height="12" viewBox="0 0 12 12"><ellipse cx="5" cy="10.6" rx="3.8" ry="1.1" fill="#333" opacity="0.7"/><circle cx="4.8" cy="6.6" r="4.2" fill="#1c44b8"/><path d="M1.4,5.4 A3.6,3.6 0 0 1 4.4,3 A4,4 0 0 0 2.4,6.8 Z" fill="#5c86e8"/><circle cx="7.8" cy="4" r="3.3" fill="#fff" stroke="#555" stroke-width="0.7"/></svg>
<div class="row b" style="left:45.6px;top:252.14px;font-size:10px">Fillet001</div>
<svg class="abs" style="left:21.2px;top:254.00px" width="6" height="7" viewBox="0 0 6 7"><path d="M1.2,1 V6 L4.9,3.5 Z" fill="#505050"/></svg>
<svg class="abs" style="left:30.2px;top:251.95px" width="11.5" height="11.5" viewBox="0 0 16 16"><path d="M9.6,9.4 L15.8,10 V13.2 L9.6,13.6 Z" fill="#3c3c3a"/><path d="M0.9,5.6 L10.8,6.8 C10.3,8.4 10.1,10 10.1,13.6 L1.4,13 Z" fill="url(#ffr)"/><path d="M10.8,6.8 L15.6,2.8 C15.6,4.4 15.4,5.2 15,6.2 L10.3,10 C10.3,8.6 10.4,7.8 10.8,6.8 Z" fill="#1a3a98"/><path d="M0.9,5.6 L5.4,2 L15.6,2.8 L10.8,6.8 Z" fill="url(#ftop)"/></svg></div>

  <!-- property -->
  <div class="abs" style="left:3px;top:358.6px;width:273px;height:54px;background:#fff;border:1px solid #cfcbc5;border-bottom:1.3px solid #c9c6c1;border-radius:2px">
    <div class="hdr" style="height:17px"></div>
    <div class="abs" style="left:65px;top:1px;width:1px;height:15px;background:#dcdad6"></div>
  </div>
  <div class="t10" style="left:6.8px;top:363px;letter-spacing:0.3px">Property</div>
  <div class="t10" style="left:73px;top:363px">Value</div>

  <!-- 3D view -->
  <div id="view3d"><svg width="516" height="340" viewBox="281 72 516 340" style="position:absolute;left:0;top:0"><defs><linearGradient id="gb" gradientUnits="userSpaceOnUse" x1="438.70" y1="0" x2="635.90" y2="0"><stop offset="0.0000" stop-color="#2e2e2e"/><stop offset="0.0417" stop-color="#616161"/><stop offset="0.0833" stop-color="#747474"/><stop offset="0.1250" stop-color="#818181"/><stop offset="0.1667" stop-color="#8a8a8a"/><stop offset="0.2083" stop-color="#929292"/><stop offset="0.2500" stop-color="#979797"/><stop offset="0.2917" stop-color="#9b9b9b"/><stop offset="0.3333" stop-color="#9e9e9e"/><stop offset="0.3750" stop-color="#a0a0a0"/><stop offset="0.4167" stop-color="#a1a1a1"/><stop offset="0.4583" stop-color="#a1a1a1"/><stop offset="0.5000" stop-color="#a0a0a0"/><stop offset="0.5417" stop-color="#9d9d9d"/><stop offset="0.5833" stop-color="#999999"/><stop offset="0.6250" stop-color="#949494"/><stop offset="0.6667" stop-color="#8e8e8e"/><stop offset="0.7083" stop-color="#878787"/><stop offset="0.7500" stop-color="#7e7e7e"/><stop offset="0.7917" stop-color="#757575"/><stop offset="0.8333" stop-color="#696969"/><stop offset="0.8750" stop-color="#5b5b5b"/><stop offset="0.9167" stop-color="#4a4a4a"/><stop offset="0.9583" stop-color="#333333"/><stop offset="1.0000" stop-color="#1c1c1c"/></linearGradient><clipPath id="cpb"><path d="M438.70,175 L438.70,318.10 A98.60,61.20 0 0 0 635.90,318.10 L635.90,175 Z"/></clipPath><linearGradient id="gf0" gradientUnits="userSpaceOnUse" x1="438.70" y1="0" x2="635.90" y2="0"><stop offset="0.0000" stop-color="#2e2e2e"/><stop offset="0.0833" stop-color="#747474"/><stop offset="0.1667" stop-color="#8a8a8a"/><stop offset="0.2500" stop-color="#979797"/><stop offset="0.3333" stop-color="#9e9e9e"/><stop offset="0.4167" stop-color="#a1a1a1"/><stop offset="0.5000" stop-color="#a0a0a0"/><stop offset="0.5833" stop-color="#999999"/><stop offset="0.6667" stop-color="#8e8e8e"/><stop offset="0.7500" stop-color="#7e7e7e"/><stop offset="0.8333" stop-color="#696969"/><stop offset="0.9167" stop-color="#4a4a4a"/><stop offset="1.0000" stop-color="#1c1c1c"/></linearGradient><linearGradient id="gb0" gradientUnits="userSpaceOnUse" x1="438.70" y1="0" x2="635.90" y2="0"><stop offset="0.0000" stop-color="#2e2e2e"/><stop offset="0.0833" stop-color="#111111"/><stop offset="0.1667" stop-color="#111111"/><stop offset="0.2500" stop-color="#111111"/><stop offset="0.3333" stop-color="#111111"/><stop offset="0.4167" stop-color="#111111"/><stop offset="0.5000" stop-color="#111111"/><stop offset="0.5833" stop-color="#111111"/><stop offset="0.6667" stop-color="#111111"/><stop offset="0.7500" stop-color="#111111"/><stop offset="0.8333" stop-color="#111111"/><stop offset="0.9167" stop-color="#111111"/><stop offset="1.0000" stop-color="#1c1c1c"/></linearGradient><linearGradient id="gf1" gradientUnits="userSpaceOnUse" x1="438.75" y1="0" x2="635.85" y2="0"><stop offset="0.0000" stop-color="#373737"/><stop offset="0.0833" stop-color="#7d7d7d"/><stop offset="0.1667" stop-color="#939393"/><stop offset="0.2500" stop-color="#a0a0a0"/><stop offset="0.3333" stop-color="#a7a7a7"/><stop offset="0.4167" stop-color="#aaaaaa"/><stop offset="0.5000" stop-color="#a9a9a9"/><stop offset="0.5833" stop-color="#a1a1a1"/><stop offset="0.6667" stop-color="#969696"/><stop offset="0.7500" stop-color="#878787"/><stop offset="0.8333" stop-color="#727272"/><stop offset="0.9167" stop-color="#535353"/><stop offset="1.0000" stop-color="#1c1c1c"/></linearGradient><linearGradient id="gb1" gradientUnits="userSpaceOnUse" x1="438.75" y1="0" x2="635.85" y2="0"><stop offset="0.0000" stop-color="#373737"/><stop offset="0.0833" stop-color="#111111"/><stop offset="0.1667" stop-color="#111111"/><stop offset="0.2500" stop-color="#111111"/><stop offset="0.3333" stop-color="#111111"/><stop offset="0.4167" stop-color="#111111"/><stop offset="0.5000" stop-color="#111111"/><stop offset="0.5833" stop-color="#111111"/><stop offset="0.6667" stop-color="#111111"/><stop offset="0.7500" stop-color="#111111"/><stop offset="0.8333" stop-color="#111111"/><stop offset="0.9167" stop-color="#111111"/><stop offset="1.0000" stop-color="#1c1c1c"/></linearGradient><linearGradient id="gf2" gradientUnits="userSpaceOnUse" x1="438.90" y1="0" x2="635.70" y2="0"><stop offset="0.0000" stop-color="#404040"/><stop offset="0.0833" stop-color="#858585"/><stop offset="0.1667" stop-color="#9b9b9b"/><stop offset="0.2500" stop-color="#a8a8a8"/><stop offset="0.3333" stop-color="#afafaf"/><stop offset="0.4167" stop-color="#b2b2b2"/><stop offset="0.5000" stop-color="#b1b1b1"/><stop offset="0.5833" stop-color="#aaaaaa"/><stop offset="0.6667" stop-color="#9e9e9e"/><stop offset="0.7500" stop-color="#8f8f8f"/><stop offset="0.8333" stop-color="#7a7a7a"/><stop offset="0.9167" stop-color="#5c5c5c"/><stop offset="1.0000" stop-color="#1c1c1c"/></linearGradient><linearGradient id="gb2" gradientUnits="userSpaceOnUse" x1="438.90" y1="0" x2="635.70" y2="0"><stop offset="0.0000" stop-color="#404040"/><stop offset="0.0833" stop-color="#111111"/><stop offset="0.1667" stop-color="#111111"/><stop offset="0.2500" stop-color="#111111"/><stop offset="0.3333" stop-color="#111111"/><stop offset="0.4167" stop-color="#111111"/><stop offset="0.5000" stop-color="#111111"/><stop offset="0.5833" stop-color="#111111"/><stop offset="0.6667" stop-color="#111111"/><stop offset="0.7500" stop-color="#111111"/><stop offset="0.8333" stop-color="#111111"/><stop offset="0.9167" stop-color="#111111"/><stop offset="1.0000" stop-color="#1c1c1c"/></linearGradient><linearGradient id="gf3" gradientUnits="userSpaceOnUse" x1="439.15" y1="0" x2="635.45" y2="0"><stop offset="0.0000" stop-color="#484848"/><stop offset="0.0833" stop-color="#8c8c8c"/><stop offset="0.1667" stop-color="#a2a2a2"/><stop offset="0.2500" stop-color="#afafaf"/><stop offset="0.3333" stop-color="#b6b6b6"/><stop offset="0.4167" stop-color="#b9b9b9"/><stop offset="0.5000" stop-color="#b8b8b8"/><stop offset="0.5833" stop-color="#b1b1b1"/><stop offset="0.6667" stop-color="#a6a6a6"/><stop offset="0.7500" stop-color="#979797"/><stop offset="0.8333" stop-color="#828282"/><stop offset="0.9167" stop-color="#646464"/><stop offset="1.0000" stop-color="#1c1c1c"/></linearGradient><linearGradient id="gb3" gradientUnits="userSpaceOnUse" x1="439.15" y1="0" x2="635.45" y2="0"><stop offset="0.0000" stop-color="#484848"/><stop offset="0.0833" stop-color="#111111"/><stop offset="0.1667" stop-color="#111111"/><stop offset="0.2500" stop-color="#111111"/><stop offset="0.3333" stop-color="#111111"/><stop offset="0.4167" stop-color="#111111"/><stop offset="0.5000" stop-color="#111111"/><stop offset="0.5833" stop-color="#111111"/><stop offset="0.6667" stop-color="#111111"/><stop offset="0.7500" stop-color="#111111"/><stop offset="0.8333" stop-color="#111111"/><stop offset="0.9167" stop-color="#111111"/><stop offset="1.0000" stop-color="#1c1c1c"/></linearGradient><linearGradient id="gf4" gradientUnits="userSpaceOnUse" x1="439.49" y1="0" x2="635.11" y2="0"><stop offset="0.0000" stop-color="#505050"/><stop offset="0.0833" stop-color="#949494"/><stop offset="0.1667" stop-color="#a9a9a9"/><stop offset="0.2500" stop-color="#b6b6b6"/><stop offset="0.3333" stop-color="#bdbdbd"/><stop offset="0.4167" stop-color="#c0c0c0"/><stop offset="0.5000" stop-color="#c0c0c0"/><stop offset="0.5833" stop-color="#b9b9b9"/><stop offset="0.6667" stop-color="#adadad"/><stop offset="0.7500" stop-color="#9e9e9e"/><stop offset="0.8333" stop-color="#898989"/><stop offset="0.9167" stop-color="#6c6c6c"/><stop offset="1.0000" stop-color="#202020"/></linearGradient><linearGradient id="gb4" gradientUnits="userSpaceOnUse" x1="439.49" y1="0" x2="635.11" y2="0"><stop offset="0.0000" stop-color="#505050"/><stop offset="0.0833" stop-color="#111111"/><stop offset="0.1667" stop-color="#111111"/><stop offset="0.2500" stop-color="#111111"/><stop offset="0.3333" stop-color="#111111"/><stop offset="0.4167" stop-color="#111111"/><stop offset="0.5000" stop-color="#111111"/><stop offset="0.5833" stop-color="#111111"/><stop offset="0.6667" stop-color="#111111"/><stop offset="0.7500" stop-color="#111111"/><stop offset="0.8333" stop-color="#111111"/><stop offset="0.9167" stop-color="#111111"/><stop offset="1.0000" stop-color="#202020"/></linearGradient><linearGradient id="gf5" gradientUnits="userSpaceOnUse" x1="439.94" y1="0" x2="634.66" y2="0"><stop offset="0.0000" stop-color="#595959"/><stop offset="0.0833" stop-color="#9a9a9a"/><stop offset="0.1667" stop-color="#afafaf"/><stop offset="0.2500" stop-color="#bbbbbb"/><stop offset="0.3333" stop-color="#c3c3c3"/><stop offset="0.4167" stop-color="#c7c7c7"/><stop offset="0.5000" stop-color="#c7c7c7"/><stop offset="0.5833" stop-color="#c0c0c0"/><stop offset="0.6667" stop-color="#b4b4b4"/><stop offset="0.7500" stop-color="#a4a4a4"/><stop offset="0.8333" stop-color="#909090"/><stop offset="0.9167" stop-color="#737373"/><stop offset="1.0000" stop-color="#2a2a2a"/></linearGradient><linearGradient id="gb5" gradientUnits="userSpaceOnUse" x1="439.94" y1="0" x2="634.66" y2="0"><stop offset="0.0000" stop-color="#595959"/><stop offset="0.0833" stop-color="#111111"/><stop offset="0.1667" stop-color="#111111"/><stop offset="0.2500" stop-color="#111111"/><stop offset="0.3333" stop-color="#111111"/><stop offset="0.4167" stop-color="#111111"/><stop offset="0.5000" stop-color="#111111"/><stop offset="0.5833" stop-color="#111111"/><stop offset="0.6667" stop-color="#111111"/><stop offset="0.7500" stop-color="#111111"/><stop offset="0.8333" stop-color="#111111"/><stop offset="0.9167" stop-color="#111111"/><stop offset="1.0000" stop-color="#2a2a2a"/></linearGradient><linearGradient id="gf6" gradientUnits="userSpaceOnUse" x1="440.47" y1="0" x2="634.13" y2="0"><stop offset="0.0000" stop-color="#606060"/><stop offset="0.0833" stop-color="#a0a0a0"/><stop offset="0.1667" stop-color="#b4b4b4"/><stop offset="0.2500" stop-color="#c1c1c1"/><stop offset="0.3333" stop-color="#c9c9c9"/><stop offset="0.4167" stop-color="#cecece"/><stop offset="0.5000" stop-color="#cecece"/><stop offset="0.5833" stop-color="#c6c6c6"/><stop offset="0.6667" stop-color="#bababa"/><stop offset="0.7500" stop-color="#aaaaaa"/><stop offset="0.8333" stop-color="#969696"/><stop offset="0.9167" stop-color="#7a7a7a"/><stop offset="1.0000" stop-color="#333333"/></linearGradient><linearGradient id="gb6" gradientUnits="userSpaceOnUse" x1="440.47" y1="0" x2="634.13" y2="0"><stop offset="0.0000" stop-color="#606060"/><stop offset="0.0833" stop-color="#111111"/><stop offset="0.1667" stop-color="#111111"/><stop offset="0.2500" stop-color="#111111"/><stop offset="0.3333" stop-color="#111111"/><stop offset="0.4167" stop-color="#111111"/><stop offset="0.5000" stop-color="#111111"/><stop offset="0.5833" stop-color="#111111"/><stop offset="0.6667" stop-color="#111111"/><stop offset="0.7500" stop-color="#111111"/><stop offset="0.8333" stop-color="#111111"/><stop offset="0.9167" stop-color="#111111"/><stop offset="1.0000" stop-color="#333333"/></linearGradient><linearGradient id="gf7" gradientUnits="userSpaceOnUse" x1="441.10" y1="0" x2="633.50" y2="0"><stop offset="0.0000" stop-color="#686868"/><stop offset="0.0833" stop-color="#a5a5a5"/><stop offset="0.1667" stop-color="#b9b9b9"/><stop offset="0.2500" stop-color="#c5c5c5"/><stop offset="0.3333" stop-color="#cecece"/><stop offset="0.4167" stop-color="#d4d4d4"/><stop offset="0.5000" stop-color="#d4d4d4"/><stop offset="0.5833" stop-color="#cccccc"/><stop offset="0.6667" stop-color="#bfbfbf"/><stop offset="0.7500" stop-color="#afafaf"/><stop offset="0.8333" stop-color="#9c9c9c"/><stop offset="0.9167" stop-color="#808080"/><stop offset="1.0000" stop-color="#3c3c3c"/></linearGradient><linearGradient id="gb7" gradientUnits="userSpaceOnUse" x1="441.10" y1="0" x2="633.50" y2="0"><stop offset="0.0000" stop-color="#686868"/><stop offset="0.0833" stop-color="#111111"/><stop offset="0.1667" stop-color="#111111"/><stop offset="0.2500" stop-color="#111111"/><stop offset="0.3333" stop-color="#111111"/><stop offset="0.4167" stop-color="#111111"/><stop offset="0.5000" stop-color="#111111"/><stop offset="0.5833" stop-color="#111111"/><stop offset="0.6667" stop-color="#111111"/><stop offset="0.7500" stop-color="#111111"/><stop offset="0.8333" stop-color="#111111"/><stop offset="0.9167" stop-color="#111111"/><stop offset="1.0000" stop-color="#3c3c3c"/></linearGradient><linearGradient id="gf8" gradientUnits="userSpaceOnUse" x1="441.81" y1="0" x2="632.79" y2="0"><stop offset="0.0000" stop-color="#6f6f6f"/><stop offset="0.0833" stop-color="#aaaaaa"/><stop offset="0.1667" stop-color="#bdbdbd"/><stop offset="0.2500" stop-color="#c8c8c8"/><stop offset="0.3333" stop-color="#d2d2d2"/><stop offset="0.4167" stop-color="#d8d8d8"/><stop offset="0.5000" stop-color="#d9d9d9"/><stop offset="0.5833" stop-color="#d1d1d1"/><stop offset="0.6667" stop-color="#c4c4c4"/><stop offset="0.7500" stop-color="#b3b3b3"/><stop offset="0.8333" stop-color="#a0a0a0"/><stop offset="0.9167" stop-color="#868686"/><stop offset="1.0000" stop-color="#454545"/></linearGradient><linearGradient id="gb8" gradientUnits="userSpaceOnUse" x1="441.81" y1="0" x2="632.79" y2="0"><stop offset="0.0000" stop-color="#6f6f6f"/><stop offset="0.0833" stop-color="#111111"/><stop offset="0.1667" stop-color="#111111"/><stop offset="0.2500" stop-color="#111111"/><stop offset="0.3333" stop-color="#111111"/><stop offset="0.4167" stop-color="#111111"/><stop offset="0.5000" stop-color="#111111"/><stop offset="0.5833" stop-color="#111111"/><stop offset="0.6667" stop-color="#111111"/><stop offset="0.7500" stop-color="#111111"/><stop offset="0.8333" stop-color="#111111"/><stop offset="0.9167" stop-color="#111111"/><stop offset="1.0000" stop-color="#454545"/></linearGradient><linearGradient id="gf9" gradientUnits="userSpaceOnUse" x1="442.61" y1="0" x2="631.99" y2="0"><stop offset="0.0000" stop-color="#757575"/><stop offset="0.0833" stop-color="#adadad"/><stop offset="0.1667" stop-color="#bfbfbf"/><stop offset="0.2500" stop-color="#cbcbcb"/><stop offset="0.3333" stop-color="#d4d4d4"/><stop offset="0.4167" stop-color="#dbdbdb"/><stop offset="0.5000" stop-color="#dcdcdc"/><stop offset="0.5833" stop-color="#d4d4d4"/><stop offset="0.6667" stop-color="#c7c7c7"/><stop offset="0.7500" stop-color="#b7b7b7"/><stop offset="0.8333" stop-color="#a5a5a5"/><stop offset="0.9167" stop-color="#8c8c8c"/><stop offset="1.0000" stop-color="#4d4d4d"/></linearGradient><linearGradient id="gb9" gradientUnits="userSpaceOnUse" x1="442.61" y1="0" x2="631.99" y2="0"><stop offset="0.0000" stop-color="#757575"/><stop offset="0.0833" stop-color="#383838"/><stop offset="0.1667" stop-color="#111111"/><stop offset="0.2500" stop-color="#111111"/><stop offset="0.3333" stop-color="#111111"/><stop offset="0.4167" stop-color="#111111"/><stop offset="0.5000" stop-color="#111111"/><stop offset="0.5833" stop-color="#111111"/><stop offset="0.6667" stop-color="#111111"/><stop offset="0.7500" stop-color="#111111"/><stop offset="0.8333" stop-color="#111111"/><stop offset="0.9167" stop-color="#1c1c1c"/><stop offset="1.0000" stop-color="#4d4d4d"/></linearGradient><linearGradient id="gf10" gradientUnits="userSpaceOnUse" x1="443.49" y1="0" x2="631.11" y2="0"><stop offset="0.0000" stop-color="#7b7b7b"/><stop offset="0.0833" stop-color="#b0b0b0"/><stop offset="0.1667" stop-color="#c1c1c1"/><stop offset="0.2500" stop-color="#cdcdcd"/><stop offset="0.3333" stop-color="#d5d5d5"/><stop offset="0.4167" stop-color="#dcdcdc"/><stop offset="0.5000" stop-color="#dddddd"/><stop offset="0.5833" stop-color="#d6d6d6"/><stop offset="0.6667" stop-color="#c9c9c9"/><stop offset="0.7500" stop-color="#bababa"/><stop offset="0.8333" stop-color="#a8a8a8"/><stop offset="0.9167" stop-color="#919191"/><stop offset="1.0000" stop-color="#565656"/></linearGradient><linearGradient id="gb10" gradientUnits="userSpaceOnUse" x1="443.49" y1="0" x2="631.11" y2="0"><stop offset="0.0000" stop-color="#7b7b7b"/><stop offset="0.0833" stop-color="#424242"/><stop offset="0.1667" stop-color="#111111"/><stop offset="0.2500" stop-color="#111111"/><stop offset="0.3333" stop-color="#111111"/><stop offset="0.4167" stop-color="#111111"/><stop offset="0.5000" stop-color="#111111"/><stop offset="0.5833" stop-color="#111111"/><stop offset="0.6667" stop-color="#111111"/><stop offset="0.7500" stop-color="#111111"/><stop offset="0.8333" stop-color="#111111"/><stop offset="0.9167" stop-color="#232323"/><stop offset="1.0000" stop-color="#565656"/></linearGradient><linearGradient id="gf11" gradientUnits="userSpaceOnUse" x1="444.44" y1="0" x2="630.16" y2="0"><stop offset="0.0000" stop-color="#818181"/><stop offset="0.0833" stop-color="#b3b3b3"/><stop offset="0.1667" stop-color="#c3c3c3"/><stop offset="0.2500" stop-color="#cdcdcd"/><stop offset="0.3333" stop-color="#d5d5d5"/><stop offset="0.4167" stop-color="#dbdbdb"/><stop offset="0.5000" stop-color="#dcdcdc"/><stop offset="0.5833" stop-color="#d5d5d5"/><stop offset="0.6667" stop-color="#c9c9c9"/><stop offset="0.7500" stop-color="#bbbbbb"/><stop offset="0.8333" stop-color="#ababab"/><stop offset="0.9167" stop-color="#959595"/><stop offset="1.0000" stop-color="#5e5e5e"/></linearGradient><linearGradient id="gb11" gradientUnits="userSpaceOnUse" x1="444.44" y1="0" x2="630.16" y2="0"><stop offset="0.0000" stop-color="#818181"/><stop offset="0.0833" stop-color="#4b4b4b"/><stop offset="0.1667" stop-color="#373737"/><stop offset="0.2500" stop-color="#111111"/><stop offset="0.3333" stop-color="#111111"/><stop offset="0.4167" stop-color="#111111"/><stop offset="0.5000" stop-color="#111111"/><stop offset="0.5833" stop-color="#111111"/><stop offset="0.6667" stop-color="#111111"/><stop offset="0.7500" stop-color="#111111"/><stop offset="0.8333" stop-color="#202020"/><stop offset="0.9167" stop-color="#2e2e2e"/><stop offset="1.0000" stop-color="#5e5e5e"/></linearGradient><linearGradient id="gf12" gradientUnits="userSpaceOnUse" x1="445.46" y1="0" x2="629.14" y2="0"><stop offset="0.0000" stop-color="#868686"/><stop offset="0.0833" stop-color="#b4b4b4"/><stop offset="0.1667" stop-color="#c3c3c3"/><stop offset="0.2500" stop-color="#cccccc"/><stop offset="0.3333" stop-color="#d3d3d3"/><stop offset="0.4167" stop-color="#d8d8d8"/><stop offset="0.5000" stop-color="#d8d8d8"/><stop offset="0.5833" stop-color="#d3d3d3"/><stop offset="0.6667" stop-color="#c9c9c9"/><stop offset="0.7500" stop-color="#bcbcbc"/><stop offset="0.8333" stop-color="#adadad"/><stop offset="0.9167" stop-color="#999999"/><stop offset="1.0000" stop-color="#656565"/></linearGradient><linearGradient id="gb12" gradientUnits="userSpaceOnUse" x1="445.46" y1="0" x2="629.14" y2="0"><stop offset="0.0000" stop-color="#868686"/><stop offset="0.0833" stop-color="#545454"/><stop offset="0.1667" stop-color="#424242"/><stop offset="0.2500" stop-color="#353535"/><stop offset="0.3333" stop-color="#111111"/><stop offset="0.4167" stop-color="#111111"/><stop offset="0.5000" stop-color="#111111"/><stop offset="0.5833" stop-color="#111111"/><stop offset="0.6667" stop-color="#111111"/><stop offset="0.7500" stop-color="#252525"/><stop offset="0.8333" stop-color="#2c2c2c"/><stop offset="0.9167" stop-color="#393939"/><stop offset="1.0000" stop-color="#656565"/></linearGradient><linearGradient id="gf13" gradientUnits="userSpaceOnUse" x1="446.55" y1="0" x2="628.05" y2="0"><stop offset="0.0000" stop-color="#8b8b8b"/><stop offset="0.0833" stop-color="#b5b5b5"/><stop offset="0.1667" stop-color="#c2c2c2"/><stop offset="0.2500" stop-color="#cbcbcb"/><stop offset="0.3333" stop-color="#d1d1d1"/><stop offset="0.4167" stop-color="#d4d4d4"/><stop offset="0.5000" stop-color="#d4d4d4"/><stop offset="0.5833" stop-color="#cfcfcf"/><stop offset="0.6667" stop-color="#c7c7c7"/><stop offset="0.7500" stop-color="#bcbcbc"/><stop offset="0.8333" stop-color="#aeaeae"/><stop offset="0.9167" stop-color="#9c9c9c"/><stop offset="1.0000" stop-color="#6d6d6d"/></linearGradient><linearGradient id="gb13" gradientUnits="userSpaceOnUse" x1="446.55" y1="0" x2="628.05" y2="0"><stop offset="0.0000" stop-color="#8b8b8b"/><stop offset="0.0833" stop-color="#5d5d5d"/><stop offset="0.1667" stop-color="#4c4c4c"/><stop offset="0.2500" stop-color="#414141"/><stop offset="0.3333" stop-color="#393939"/><stop offset="0.4167" stop-color="#343434"/><stop offset="0.5000" stop-color="#313131"/><stop offset="0.5833" stop-color="#2f2f2f"/><stop offset="0.6667" stop-color="#2f2f2f"/><stop offset="0.7500" stop-color="#323232"/><stop offset="0.8333" stop-color="#383838"/><stop offset="0.9167" stop-color="#444444"/><stop offset="1.0000" stop-color="#6d6d6d"/></linearGradient><linearGradient id="gf14" gradientUnits="userSpaceOnUse" x1="447.70" y1="0" x2="626.90" y2="0"><stop offset="0.0000" stop-color="#8f8f8f"/><stop offset="0.0833" stop-color="#b5b5b5"/><stop offset="0.1667" stop-color="#c1c1c1"/><stop offset="0.2500" stop-color="#c8c8c8"/><stop offset="0.3333" stop-color="#cdcdcd"/><stop offset="0.4167" stop-color="#d0d0d0"/><stop offset="0.5000" stop-color="#cfcfcf"/><stop offset="0.5833" stop-color="#cbcbcb"/><stop offset="0.6667" stop-color="#c4c4c4"/><stop offset="0.7500" stop-color="#bbbbbb"/><stop offset="0.8333" stop-color="#afafaf"/><stop offset="0.9167" stop-color="#9e9e9e"/><stop offset="1.0000" stop-color="#747474"/></linearGradient><linearGradient id="gb14" gradientUnits="userSpaceOnUse" x1="447.70" y1="0" x2="626.90" y2="0"><stop offset="0.0000" stop-color="#8f8f8f"/><stop offset="0.0833" stop-color="#666666"/><stop offset="0.1667" stop-color="#565656"/><stop offset="0.2500" stop-color="#4c4c4c"/><stop offset="0.3333" stop-color="#454545"/><stop offset="0.4167" stop-color="#404040"/><stop offset="0.5000" stop-color="#3e3e3e"/><stop offset="0.5833" stop-color="#3c3c3c"/><stop offset="0.6667" stop-color="#3c3c3c"/><stop offset="0.7500" stop-color="#3f3f3f"/><stop offset="0.8333" stop-color="#444444"/><stop offset="0.9167" stop-color="#4f4f4f"/><stop offset="1.0000" stop-color="#747474"/></linearGradient><linearGradient id="gf15" gradientUnits="userSpaceOnUse" x1="448.91" y1="0" x2="625.69" y2="0"><stop offset="0.0000" stop-color="#929292"/><stop offset="0.0833" stop-color="#b4b4b4"/><stop offset="0.1667" stop-color="#bfbfbf"/><stop offset="0.2500" stop-color="#c5c5c5"/><stop offset="0.3333" stop-color="#c9c9c9"/><stop offset="0.4167" stop-color="#cbcbcb"/><stop offset="0.5000" stop-color="#cacaca"/><stop offset="0.5833" stop-color="#c7c7c7"/><stop offset="0.6667" stop-color="#c1c1c1"/><stop offset="0.7500" stop-color="#b9b9b9"/><stop offset="0.8333" stop-color="#afafaf"/><stop offset="0.9167" stop-color="#a0a0a0"/><stop offset="1.0000" stop-color="#7a7a7a"/></linearGradient><linearGradient id="gb15" gradientUnits="userSpaceOnUse" x1="448.91" y1="0" x2="625.69" y2="0"><stop offset="0.0000" stop-color="#929292"/><stop offset="0.0833" stop-color="#6e6e6e"/><stop offset="0.1667" stop-color="#606060"/><stop offset="0.2500" stop-color="#575757"/><stop offset="0.3333" stop-color="#515151"/><stop offset="0.4167" stop-color="#4d4d4d"/><stop offset="0.5000" stop-color="#4a4a4a"/><stop offset="0.5833" stop-color="#494949"/><stop offset="0.6667" stop-color="#494949"/><stop offset="0.7500" stop-color="#4b4b4b"/><stop offset="0.8333" stop-color="#505050"/><stop offset="0.9167" stop-color="#5a5a5a"/><stop offset="1.0000" stop-color="#7a7a7a"/></linearGradient><linearGradient id="gf16" gradientUnits="userSpaceOnUse" x1="450.16" y1="0" x2="624.44" y2="0"><stop offset="0.0000" stop-color="#959595"/><stop offset="0.0833" stop-color="#b2b2b2"/><stop offset="0.1667" stop-color="#bcbcbc"/><stop offset="0.2500" stop-color="#c1c1c1"/><stop offset="0.3333" stop-color="#c4c4c4"/><stop offset="0.4167" stop-color="#c6c6c6"/><stop offset="0.5000" stop-color="#c5c5c5"/><stop offset="0.5833" stop-color="#c2c2c2"/><stop offset="0.6667" stop-color="#bdbdbd"/><stop offset="0.7500" stop-color="#b7b7b7"/><stop offset="0.8333" stop-color="#aeaeae"/><stop offset="0.9167" stop-color="#a1a1a1"/><stop offset="1.0000" stop-color="#808080"/></linearGradient><linearGradient id="gb16" gradientUnits="userSpaceOnUse" x1="450.16" y1="0" x2="624.44" y2="0"><stop offset="0.0000" stop-color="#959595"/><stop offset="0.0833" stop-color="#767676"/><stop offset="0.1667" stop-color="#6a6a6a"/><stop offset="0.2500" stop-color="#626262"/><stop offset="0.3333" stop-color="#5c5c5c"/><stop offset="0.4167" stop-color="#595959"/><stop offset="0.5000" stop-color="#575757"/><stop offset="0.5833" stop-color="#555555"/><stop offset="0.6667" stop-color="#565656"/><stop offset="0.7500" stop-color="#585858"/><stop offset="0.8333" stop-color="#5c5c5c"/><stop offset="0.9167" stop-color="#646464"/><stop offset="1.0000" stop-color="#808080"/></linearGradient><linearGradient id="gf17" gradientUnits="userSpaceOnUse" x1="451.45" y1="0" x2="623.15" y2="0"><stop offset="0.0000" stop-color="#979797"/><stop offset="0.0833" stop-color="#b0b0b0"/><stop offset="0.1667" stop-color="#b8b8b8"/><stop offset="0.2500" stop-color="#bcbcbc"/><stop offset="0.3333" stop-color="#bfbfbf"/><stop offset="0.4167" stop-color="#c0c0c0"/><stop offset="0.5000" stop-color="#bfbfbf"/><stop offset="0.5833" stop-color="#bdbdbd"/><stop offset="0.6667" stop-color="#b9b9b9"/><stop offset="0.7500" stop-color="#b3b3b3"/><stop offset="0.8333" stop-color="#acacac"/><stop offset="0.9167" stop-color="#a1a1a1"/><stop offset="1.0000" stop-color="#868686"/></linearGradient><linearGradient id="gb17" gradientUnits="userSpaceOnUse" x1="451.45" y1="0" x2="623.15" y2="0"><stop offset="0.0000" stop-color="#979797"/><stop offset="0.0833" stop-color="#7d7d7d"/><stop offset="0.1667" stop-color="#737373"/><stop offset="0.2500" stop-color="#6c6c6c"/><stop offset="0.3333" stop-color="#686868"/><stop offset="0.4167" stop-color="#656565"/><stop offset="0.5000" stop-color="#636363"/><stop offset="0.5833" stop-color="#626262"/><stop offset="0.6667" stop-color="#626262"/><stop offset="0.7500" stop-color="#646464"/><stop offset="0.8333" stop-color="#676767"/><stop offset="0.9167" stop-color="#6e6e6e"/><stop offset="1.0000" stop-color="#868686"/></linearGradient><linearGradient id="gf18" gradientUnits="userSpaceOnUse" x1="452.78" y1="0" x2="621.82" y2="0"><stop offset="0.0000" stop-color="#999999"/><stop offset="0.0833" stop-color="#adadad"/><stop offset="0.1667" stop-color="#b3b3b3"/><stop offset="0.2500" stop-color="#b7b7b7"/><stop offset="0.3333" stop-color="#b9b9b9"/><stop offset="0.4167" stop-color="#b9b9b9"/><stop offset="0.5000" stop-color="#b9b9b9"/><stop offset="0.5833" stop-color="#b7b7b7"/><stop offset="0.6667" stop-color="#b4b4b4"/><stop offset="0.7500" stop-color="#b0b0b0"/><stop offset="0.8333" stop-color="#aaaaaa"/><stop offset="0.9167" stop-color="#a1a1a1"/><stop offset="1.0000" stop-color="#8b8b8b"/></linearGradient><linearGradient id="gb18" gradientUnits="userSpaceOnUse" x1="452.78" y1="0" x2="621.82" y2="0"><stop offset="0.0000" stop-color="#999999"/><stop offset="0.0833" stop-color="#848484"/><stop offset="0.1667" stop-color="#7c7c7c"/><stop offset="0.2500" stop-color="#767676"/><stop offset="0.3333" stop-color="#737373"/><stop offset="0.4167" stop-color="#707070"/><stop offset="0.5000" stop-color="#6f6f6f"/><stop offset="0.5833" stop-color="#6e6e6e"/><stop offset="0.6667" stop-color="#6e6e6e"/><stop offset="0.7500" stop-color="#6f6f6f"/><stop offset="0.8333" stop-color="#727272"/><stop offset="0.9167" stop-color="#787878"/><stop offset="1.0000" stop-color="#8b8b8b"/></linearGradient><linearGradient id="gf19" gradientUnits="userSpaceOnUse" x1="454.13" y1="0" x2="620.47" y2="0"><stop offset="0.0000" stop-color="#9a9a9a"/><stop offset="0.0833" stop-color="#a9a9a9"/><stop offset="0.1667" stop-color="#aeaeae"/><stop offset="0.2500" stop-color="#b0b0b0"/><stop offset="0.3333" stop-color="#b2b2b2"/><stop offset="0.4167" stop-color="#b2b2b2"/><stop offset="0.5000" stop-color="#b2b2b2"/><stop offset="0.5833" stop-color="#b1b1b1"/><stop offset="0.6667" stop-color="#aeaeae"/><stop offset="0.7500" stop-color="#ababab"/><stop offset="0.8333" stop-color="#a6a6a6"/><stop offset="0.9167" stop-color="#a0a0a0"/><stop offset="1.0000" stop-color="#8f8f8f"/></linearGradient><linearGradient id="gb19" gradientUnits="userSpaceOnUse" x1="454.13" y1="0" x2="620.47" y2="0"><stop offset="0.0000" stop-color="#9a9a9a"/><stop offset="0.0833" stop-color="#8a8a8a"/><stop offset="0.1667" stop-color="#848484"/><stop offset="0.2500" stop-color="#808080"/><stop offset="0.3333" stop-color="#7d7d7d"/><stop offset="0.4167" stop-color="#7b7b7b"/><stop offset="0.5000" stop-color="#7a7a7a"/><stop offset="0.5833" stop-color="#797979"/><stop offset="0.6667" stop-color="#797979"/><stop offset="0.7500" stop-color="#7a7a7a"/><stop offset="0.8333" stop-color="#7d7d7d"/><stop offset="0.9167" stop-color="#818181"/><stop offset="1.0000" stop-color="#8f8f8f"/></linearGradient><linearGradient id="gf20" gradientUnits="userSpaceOnUse" x1="455.51" y1="0" x2="619.09" y2="0"><stop offset="0.0000" stop-color="#9a9a9a"/><stop offset="0.0833" stop-color="#a4a4a4"/><stop offset="0.1667" stop-color="#a7a7a7"/><stop offset="0.2500" stop-color="#a9a9a9"/><stop offset="0.3333" stop-color="#aaaaaa"/><stop offset="0.4167" stop-color="#ababab"/><stop offset="0.5000" stop-color="#aaaaaa"/><stop offset="0.5833" stop-color="#a9a9a9"/><stop offset="0.6667" stop-color="#a8a8a8"/><stop offset="0.7500" stop-color="#a6a6a6"/><stop offset="0.8333" stop-color="#a3a3a3"/><stop offset="0.9167" stop-color="#9e9e9e"/><stop offset="1.0000" stop-color="#939393"/></linearGradient><linearGradient id="gb20" gradientUnits="userSpaceOnUse" x1="455.51" y1="0" x2="619.09" y2="0"><stop offset="0.0000" stop-color="#9a9a9a"/><stop offset="0.0833" stop-color="#8f8f8f"/><stop offset="0.1667" stop-color="#8b8b8b"/><stop offset="0.2500" stop-color="#898989"/><stop offset="0.3333" stop-color="#878787"/><stop offset="0.4167" stop-color="#868686"/><stop offset="0.5000" stop-color="#858585"/><stop offset="0.5833" stop-color="#848484"/><stop offset="0.6667" stop-color="#848484"/><stop offset="0.7500" stop-color="#858585"/><stop offset="0.8333" stop-color="#878787"/><stop offset="0.9167" stop-color="#898989"/><stop offset="1.0000" stop-color="#939393"/></linearGradient><linearGradient id="gf21" gradientUnits="userSpaceOnUse" x1="456.90" y1="0" x2="617.70" y2="0"><stop offset="0.0000" stop-color="#9a9a9a"/><stop offset="0.0833" stop-color="#9f9f9f"/><stop offset="0.1667" stop-color="#a0a0a0"/><stop offset="0.2500" stop-color="#a1a1a1"/><stop offset="0.3333" stop-color="#a2a2a2"/><stop offset="0.4167" stop-color="#a2a2a2"/><stop offset="0.5000" stop-color="#a2a2a2"/><stop offset="0.5833" stop-color="#a2a2a2"/><stop offset="0.6667" stop-color="#a1a1a1"/><stop offset="0.7500" stop-color="#a0a0a0"/><stop offset="0.8333" stop-color="#9e9e9e"/><stop offset="0.9167" stop-color="#9c9c9c"/><stop offset="1.0000" stop-color="#969696"/></linearGradient><linearGradient id="gb21" gradientUnits="userSpaceOnUse" x1="456.90" y1="0" x2="617.70" y2="0"><stop offset="0.0000" stop-color="#9a9a9a"/><stop offset="0.0833" stop-color="#949494"/><stop offset="0.1667" stop-color="#929292"/><stop offset="0.2500" stop-color="#919191"/><stop offset="0.3333" stop-color="#909090"/><stop offset="0.4167" stop-color="#909090"/><stop offset="0.5000" stop-color="#8f8f8f"/><stop offset="0.5833" stop-color="#8f8f8f"/><stop offset="0.6667" stop-color="#8f8f8f"/><stop offset="0.7500" stop-color="#8f8f8f"/><stop offset="0.8333" stop-color="#909090"/><stop offset="0.9167" stop-color="#929292"/><stop offset="1.0000" stop-color="#969696"/></linearGradient><linearGradient id="gf22" gradientUnits="userSpaceOnUse" x1="458.30" y1="0" x2="616.30" y2="0"><stop offset="0.0000" stop-color="#999999"/><stop offset="0.0833" stop-color="#999999"/><stop offset="0.1667" stop-color="#999999"/><stop offset="0.2500" stop-color="#999999"/><stop offset="0.3333" stop-color="#999999"/><stop offset="0.4167" stop-color="#999999"/><stop offset="0.5000" stop-color="#999999"/><stop offset="0.5833" stop-color="#999999"/><stop offset="0.6667" stop-color="#999999"/><stop offset="0.7500" stop-color="#999999"/><stop offset="0.8333" stop-color="#999999"/><stop offset="0.9167" stop-color="#999999"/><stop offset="1.0000" stop-color="#999999"/></linearGradient><linearGradient id="gb22" gradientUnits="userSpaceOnUse" x1="458.30" y1="0" x2="616.30" y2="0"><stop offset="0.0000" stop-color="#999999"/><stop offset="0.0833" stop-color="#999999"/><stop offset="0.1667" stop-color="#999999"/><stop offset="0.2500" stop-color="#999999"/><stop offset="0.3333" stop-color="#999999"/><stop offset="0.4167" stop-color="#999999"/><stop offset="0.5000" stop-color="#999999"/><stop offset="0.5833" stop-color="#999999"/><stop offset="0.6667" stop-color="#999999"/><stop offset="0.7500" stop-color="#999999"/><stop offset="0.8333" stop-color="#999999"/><stop offset="0.9167" stop-color="#999999"/><stop offset="1.0000" stop-color="#999999"/></linearGradient></defs><path d="M281,358.4 L402.4,396 L389.4,412 L281,412 Z" fill="#9a9a9a"/><path d="M402.4,396 Q416,400.5 426,412 L389.4,412 Z" fill="#a4a4a4"/><path d="M281,358.4 L402.4,396 L389.4,412" fill="none" stroke="#181818" stroke-width="1.15"/><path d="M402.4,396 Q416,400.5 426,412" fill="none" stroke="#e2e200" stroke-width="1.2"/><g transform="rotate(-1.85 537.30 164.40)"><path d="M438.70,175 L438.70,318.10 A98.60,61.20 0 0 0 635.90,318.10 L635.90,175 Z" fill="url(#gb)"/><path d="M621.93,208.15 L622.74,347.25 L637.90,347.25 L637.90,185 Z" fill="#000" opacity="0.22" clip-path="url(#cpb)"/><path d="M438.70,180.35 A98.60,60.66 0 0 1 635.90,180.35 Z" fill="url(#gb0)"/><path d="M438.70,179.85 A98.60,60.66 0 0 0 635.90,179.85 Z" fill="url(#gf0)"/><path d="M438.75,179.24 A98.55,60.63 0 0 1 635.85,179.24 Z" fill="url(#gb1)"/><path d="M438.75,178.74 A98.55,60.63 0 0 0 635.85,178.74 Z" fill="url(#gf1)"/><path d="M438.90,178.15 A98.40,60.53 0 0 1 635.70,178.15 Z" fill="url(#gb2)"/><path d="M438.90,177.65 A98.40,60.53 0 0 0 635.70,177.65 Z" fill="url(#gf2)"/><path d="M439.15,177.06 A98.15,60.38 0 0 1 635.45,177.06 Z" fill="url(#gb3)"/><path d="M439.15,176.56 A98.15,60.38 0 0 0 635.45,176.56 Z" fill="url(#gf3)"/><path d="M439.49,175.99 A97.81,60.17 0 0 1 635.11,175.99 Z" fill="url(#gb4)"/><path d="M439.49,175.49 A97.81,60.17 0 0 0 635.11,175.49 Z" fill="url(#gf4)"/><path d="M439.94,174.95 A97.36,59.90 0 0 1 634.66,174.95 Z" fill="url(#gb5)"/><path d="M439.94,174.45 A97.36,59.90 0 0 0 634.66,174.45 Z" fill="url(#gf5)"/><path d="M440.47,173.93 A96.83,59.57 0 0 1 634.13,173.93 Z" fill="url(#gb6)"/><path d="M440.47,173.43 A96.83,59.57 0 0 0 634.13,173.43 Z" fill="url(#gf6)"/><path d="M441.10,172.94 A96.20,59.18 0 0 1 633.50,172.94 Z" fill="url(#gb7)"/><path d="M441.10,172.44 A96.20,59.18 0 0 0 633.50,172.44 Z" fill="url(#gf7)"/><path d="M441.81,171.99 A95.49,58.74 0 0 1 632.79,171.99 Z" fill="url(#gb8)"/><path d="M441.81,171.49 A95.49,58.74 0 0 0 632.79,171.49 Z" fill="url(#gf8)"/><path d="M442.61,171.09 A94.69,58.25 0 0 1 631.99,171.09 Z" fill="url(#gb9)"/><path d="M442.61,170.59 A94.69,58.25 0 0 0 631.99,170.59 Z" fill="url(#gf9)"/><path d="M443.49,170.23 A93.81,57.71 0 0 1 631.11,170.23 Z" fill="url(#gb10)"/><path d="M443.49,169.73 A93.81,57.71 0 0 0 631.11,169.73 Z" fill="url(#gf10)"/><path d="M444.44,169.42 A92.86,57.13 0 0 1 630.16,169.42 Z" fill="url(#gb11)"/><path d="M444.44,168.92 A92.86,57.13 0 0 0 630.16,168.92 Z" fill="url(#gf11)"/><path d="M445.46,168.67 A91.84,56.50 0 0 1 629.14,168.67 Z" fill="url(#gb12)"/><path d="M445.46,168.17 A91.84,56.50 0 0 0 629.14,168.17 Z" fill="url(#gf12)"/><path d="M446.55,167.98 A90.75,55.83 0 0 1 628.05,167.98 Z" fill="url(#gb13)"/><path d="M446.55,167.48 A90.75,55.83 0 0 0 628.05,167.48 Z" fill="url(#gf13)"/><path d="M447.70,167.35 A89.60,55.12 0 0 1 626.90,167.35 Z" fill="url(#gb14)"/><path d="M447.70,166.85 A89.60,55.12 0 0 0 626.90,166.85 Z" fill="url(#gf14)"/><path d="M448.91,166.79 A88.39,54.38 0 0 1 625.69,166.79 Z" fill="url(#gb15)"/><path d="M448.91,166.29 A88.39,54.38 0 0 0 625.69,166.29 Z" fill="url(#gf15)"/><path d="M450.16,166.30 A87.14,53.61 0 0 1 624.44,166.30 Z" fill="url(#gb16)"/><path d="M450.16,165.80 A87.14,53.61 0 0 0 624.44,165.80 Z" fill="url(#gf16)"/><path d="M451.45,165.87 A85.85,52.81 0 0 1 623.15,165.87 Z" fill="url(#gb17)"/><path d="M451.45,165.37 A85.85,52.81 0 0 0 623.15,165.37 Z" fill="url(#gf17)"/><path d="M452.78,165.53 A84.52,52.00 0 0 1 621.82,165.53 Z" fill="url(#gb18)"/><path d="M452.78,165.03 A84.52,52.00 0 0 0 621.82,165.03 Z" fill="url(#gf18)"/><path d="M454.13,165.25 A83.17,51.16 0 0 1 620.47,165.25 Z" fill="url(#gb19)"/><path d="M454.13,164.75 A83.17,51.16 0 0 0 620.47,164.75 Z" fill="url(#gf19)"/><path d="M455.51,165.06 A81.79,50.32 0 0 1 619.09,165.06 Z" fill="url(#gb20)"/><path d="M455.51,164.56 A81.79,50.32 0 0 0 619.09,164.56 Z" fill="url(#gf20)"/><path d="M456.90,164.94 A80.40,49.46 0 0 1 617.70,164.94 Z" fill="url(#gb21)"/><path d="M456.90,164.44 A80.40,49.46 0 0 0 617.70,164.44 Z" fill="url(#gf21)"/><path d="M458.30,164.90 A79.00,48.60 0 0 1 616.30,164.90 Z" fill="url(#gb22)"/><path d="M458.30,164.40 A79.00,48.60 0 0 0 616.30,164.40 Z" fill="url(#gf22)"/><ellipse cx="537.30" cy="164.40" rx="79.00" ry="48.60" fill="#999999" stroke="#161616" stroke-width="1.1"/><path d="M438.70,188.42 A99.60,60.66 0 0 0 635.90,188.42" fill="none" stroke="#141414" stroke-width="1.1"/><path d="M438.7,318.1 A98.6,61.2 0 0 0 635.9,318.1" fill="none" stroke="#141414" stroke-width="1.2"/><path d="M606.47,188.05 Q617.02,196.09 621.93,208.15 L622.74,347.25" fill="none" stroke="#161616" stroke-width="1"/></g><g stroke-width="1" fill="none"><path d="M780.6,394.6 L780.6,384" stroke="#2525b8"/><path d="M779.2,386 L780.6,382.6 L782,386 Z" fill="#2525b8" stroke="none"/><path d="M780.6,394.6 L791.4,398.4" stroke="#b82525"/><path d="M780.6,394.6 L785.2,390" stroke="#25a025"/></g>
<g font-family="Liberation Sans, sans-serif" font-size="6.6" fill="#2a2a2a"><text x="781.4" y="383.6">Z</text><text x="786.8" y="391">Y</text><text x="792.6" y="398.6">X</text></g></svg></div>

  <!-- dock float / close buttons -->
<svg class="abs" style="left:256px;top:76px" width="20" height="8.4" viewBox="0 0 20 8.4"><rect x="0.5" y="0.5" width="7.2" height="7.2" rx="1.4" fill="#e6e5e3" stroke="#a9a8a5" stroke-width="0.9"/><rect x="3.4" y="1.8" width="2.8" height="2.6" fill="#fff" stroke="#8e8d8a" stroke-width="0.6"/><rect x="1.8" y="3.6" width="2.6" height="2.6" fill="#fff" stroke="#8e8d8a" stroke-width="0.6"/><rect x="11.9" y="0.5" width="7.2" height="7.2" rx="1.4" fill="#e6e5e3" stroke="#a9a8a5" stroke-width="0.9"/><path d="M13.7,2.3 L17.3,5.9 M17.3,2.3 L13.7,5.9" stroke="#3e3e3c" stroke-width="1.2"/></svg>
<!-- splitter dots -->
<div class="abs" style="left:136px;top:355.6px;width:7px;height:1px;background:repeating-linear-gradient(90deg,#cbc8c3 0,#cbc8c3 1px,transparent 1px,transparent 2px)"></div>
<div class="abs" style="left:277.6px;top:236px;width:1px;height:7px;background:repeating-linear-gradient(#cbc8c3 0,#cbc8c3 1px,transparent 1px,transparent 2px)"></div>
<!-- View / Data tabs -->
<svg class="abs" style="left:0;top:411px" width="80" height="23" viewBox="0 410 80 23"><path d="M35,413.2 L41,428 Q42,430.6 45,430.6 H56 Q59,430.6 60,428 L65.4,413.2" fill="#f0efee" stroke="#a5a3a0" stroke-width="0.9"/><path d="M2.4,412.2 L7.6,428 Q8.6,430.6 11.6,430.6 H24 Q27,430.6 28,428 L34,412.2 Z" fill="#ffffff"/><path d="M2.4,412.6 L7.6,428 Q8.6,430.6 11.6,430.6 H24 Q27,430.6 28,428 L34,412.6" fill="none" stroke="#a5a3a0" stroke-width="0.9"/></svg>
<div class="t10" id="t_view" style="left:8px;top:416.5px">View</div>
<div class="t10" id="t_data" style="left:40.5px;top:415.8px">Data</div>
<!-- MDI tabs under the 3D view -->
<div class="abs" style="left:281.3px;top:412px;width:73px;height:19.6px;background:linear-gradient(#e3e2e0,#eeedec);border:1px solid #cfccc7;border-top:none;border-radius:0 0 3px 3px"></div>
<div class="abs" style="left:353.8px;top:412px;width:113.2px;height:21.2px;background:#f9f9f8;border:1px solid #c9c6c1;border-top:none;border-radius:0 0 3.5px 3.5px;box-shadow:0 0.5px 1px rgba(0,0,0,0.08)"></div>
<div class="t10" id="t_start" style="left:286.5px;top:416px">Start page</div>
<div class="t10" id="t_tut" style="left:374.4px;top:416.4px;letter-spacing:0.2px">tutorial-exp : 1*</div>
<svg class="abs" style="left:338px;top:418.2px" width="8" height="8" viewBox="0 0 8 8"><path d="M1.3,1.3 L6.7,6.7 M6.7,1.3 L1.3,6.7" stroke="#5c5c5a" stroke-width="2.2"/></svg>
<svg class="abs" style="left:450.8px;top:418.2px" width="8" height="8" viewBox="0 0 8 8"><path d="M1.3,1.3 L6.7,6.7 M6.7,1.3 L1.3,6.7" stroke="#5c5c5a" stroke-width="2.2"/></svg>
<!-- freecad doc icon -->
<svg class="abs" style="left:358.8px;top:417px" width="10" height="10" viewBox="0 0 10 10"><path d="M0.6,0.6 H5 V2.4 H2.4 V3.8 H4.2 V5.4 H2.4 V8.6 H0.6 Z" fill="#e8220c"/><circle cx="6" cy="6" r="3.3" fill="#12309a"/><g stroke="#12309a" stroke-width="1.3"><path d="M6,1.8 V10.2 M1.8,6 H10.2 M3,3 L9,9 M9,3 L3,9"/></g><circle cx="6" cy="6" r="1.3" fill="#f4f4f8"/></svg>

  <div class="abs" style="left:797px;top:19px;width:1px;height:434px;background:#b4b4b8"></div>
  <!-- status bar -->
  <div class="abs" style="left:0;top:433px;width:797px;height:1px;background:#dedbd7"></div>
  <div class="t10" style="left:5px;top:437.5px;letter-spacing:0.055px">Preselected: tutorial_exp.Fillet.Edge17 (69.414215,10.000000,9.414213)</div>
  <div class="t10" style="left:702.5px;top:437.5px">26.32 x 17.32 mm</div>
</div>
<div class="abs" style="left:0;top:452.3px;width:798px;height:4px;background:linear-gradient(#666,#3c3c3c)"></div>
</body>
</html>
